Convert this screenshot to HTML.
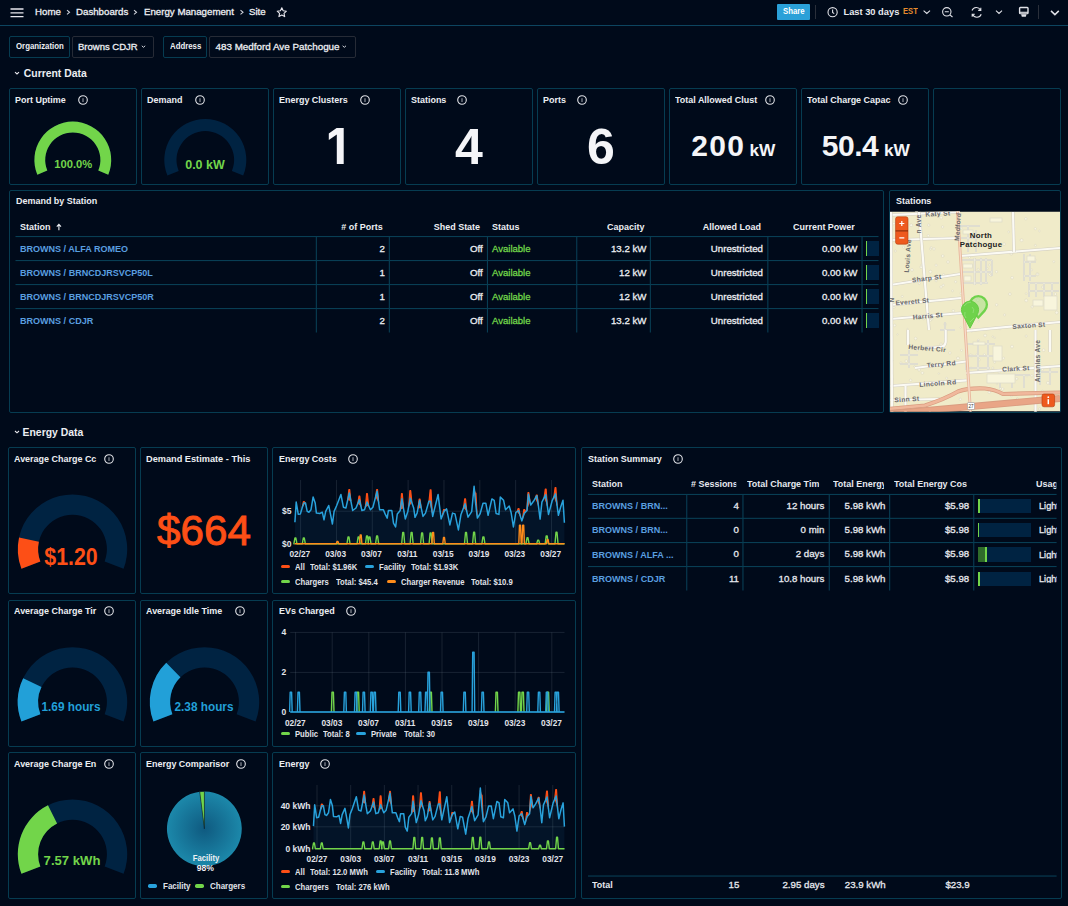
<!DOCTYPE html>
<html><head><meta charset="utf-8">
<style>
*{box-sizing:border-box;margin:0;padding:0}
html,body{width:1068px;height:906px;overflow:hidden;background:#000a1a;font-family:"Liberation Sans",sans-serif;color:#eceef2}
.a{position:absolute;line-height:1;white-space:nowrap}
.p{position:absolute;border:1px solid #063c51;border-radius:2px}
svg{position:absolute;overflow:visible}
</style></head><body>

<div class="a" style="left:0;top:25px;width:1068px;height:1px;background:#0d4560"></div>
<svg style="left:10px;top:8px" width="14" height="10" viewBox="0 0 14 10"><path d="M0.5 1H13.5M0.5 4.8H13.5M0.5 8.6H13.5" stroke="#e8e8ee" stroke-width="1.3"/></svg>
<div class="a" style="left:35.00px;top:6.94px;font-size:9.7px;font-weight:normal;color:#eceef2;-webkit-text-stroke:0.3px #eceef2;">Home</div>
<div class="a" style="left:76.00px;top:6.94px;font-size:9.7px;font-weight:normal;color:#eceef2;-webkit-text-stroke:0.3px #eceef2;">Dashboards</div>
<div class="a" style="left:144.00px;top:6.94px;font-size:9.7px;font-weight:normal;color:#eceef2;-webkit-text-stroke:0.3px #eceef2;">Energy Management</div>
<div class="a" style="left:249.00px;top:6.94px;font-size:9.7px;font-weight:normal;color:#eceef2;-webkit-text-stroke:0.3px #eceef2;">Site</div>
<svg style="left:0;top:0" width="300" height="25"><g fill="none" stroke="#cfd2da" stroke-width="1.1"><path d="M67 10.2L69.5 12.3L67 14.4M134 10.2L136.5 12.3L134 14.4M240.5 10.2L243 12.3L240.5 14.4"/></g><path d="M281.8 7.8L283.2 10.8L286.4 11.2L284 13.4L284.7 16.6L281.8 15L278.9 16.6L279.6 13.4L277.2 11.2L280.4 10.8Z" fill="none" stroke="#e8e8ee" stroke-width="1.1" stroke-linejoin="round"/></svg>
<div class="a" style="left:777px;top:4px;width:33px;height:16px;background:#2aa0d8;border-radius:1px"></div>
<div class="a" style="left:782.60px;top:8.15px;font-size:8.2px;font-weight:bold;color:#fff;transform:scaleX(0.95);transform-origin:left;">Share</div>
<div class="a" style="left:815px;top:5px;width:1px;height:14px;background:#2a2f3a"></div>
<svg style="left:0;top:0" width="1068" height="25"><g fill="none" stroke="#e0e2e8" stroke-width="1.1">
<circle cx="832.6" cy="12.2" r="4.6"/><path d="M832.6 9.5V12.4L834.2 13.6"/>
<path d="M923.6 10.6L926.8 13.4L930 10.6M996 10.6L999 13.4L1002 10.6"/>
<circle cx="946.8" cy="11.8" r="4.2"/><path d="M944.8 11.8H948.8M949.9 14.9L952.5 17"/>
<path d="M972 10.5A4.7 4.7 0 0 1 980.5 10M981.2 14.2A4.7 4.7 0 0 1 972.6 14.6M980.8 7.8V10.4H978.2M972.2 16.8V14.2H974.8"/>
</g><path fill="#e0e2e8" fill-rule="evenodd" d="M1020.4 6.7H1027.2Q1028.7 6.7 1028.7 8.2V12.7Q1028.7 14.2 1027.2 14.2H1020.4Q1018.9 14.2 1018.9 12.7V8.2Q1018.9 6.7 1020.4 6.7ZM1020.3 8.2V11.8H1027.3V8.2Z"/><path d="M1020.3 13.1H1027.3" stroke="#5a5e66" stroke-width="0.6"/><path d="M1021.1 14.2H1026.5L1025.8 16.8H1021.8Z" fill="#e0e2e8"/><g fill="none" stroke="#e0e2e8" stroke-width="1.1">
<path d="M1051 10.9L1054.9 14.6L1058.8 10.9" stroke-width="1.5"/>
</g></svg>
<div class="a" style="left:843.50px;top:7.63px;font-size:9.3px;font-weight:bold;color:#e8e9ee;">Last 30 days</div>
<div class="a" style="left:903.30px;top:8.15px;font-size:8.2px;font-weight:bold;color:#e58a2e;transform:scaleX(0.93);transform-origin:left;">EST</div>
<div class="a" style="left:1038px;top:5px;width:1px;height:14px;background:#2a2f3a"></div>
<div class="p" style="left:9px;top:36px;width:61px;height:22px;border-color:#063c51"></div>
<div class="a" style="left:15.50px;top:42.16px;font-size:8.6px;font-weight:bold;color:#eceef2;transform:scaleX(0.91);transform-origin:left;">Organization</div>
<div class="p" style="left:72px;top:36px;width:82px;height:22px;border-color:#262b36"></div>
<div class="a" style="left:78.00px;top:42.03px;font-size:9.5px;font-weight:normal;color:#eceef2;-webkit-text-stroke:0.3px #eceef2;">Browns CDJR</div>
<div class="p" style="left:163px;top:36px;width:44px;height:22px;border-color:#063c51"></div>
<div class="a" style="left:169.50px;top:42.16px;font-size:8.6px;font-weight:bold;color:#eceef2;transform:scaleX(0.91);transform-origin:left;">Address</div>
<div class="p" style="left:209px;top:36px;width:147px;height:22px;border-color:#262b36"></div>
<div class="a" style="left:215.50px;top:41.97px;font-size:9.85px;font-weight:normal;color:#eceef2;-webkit-text-stroke:0.3px #eceef2;">483 Medford Ave Patchogue</div>
<svg style="left:0;top:0" width="400" height="60"><g fill="none" stroke="#d0d3da" stroke-width="1"><path d="M141.8 45.8L143.5 47.3L145.2 45.8M342.6 45.8L344.3 47.3L346 45.8"/></g></svg>
<svg style="left:0;top:0" width="100" height="450"><g fill="none" stroke="#e8e8ee" stroke-width="1.1"><path d="M15 72.2L17 74L19 72.2M15 431L17 432.8L19 431"/></g></svg>
<div class="a" style="left:23.80px;top:69.31px;font-size:10.4px;font-weight:bold;color:#eceef2;">Current Data</div>
<div class="a" style="left:22.60px;top:428.31px;font-size:10.4px;font-weight:bold;color:#eceef2;">Energy Data</div>
<div class="p" style="left:9px;top:88px;width:128px;height:97px"></div>
<div class="p" style="left:141px;top:88px;width:128px;height:97px"></div>
<div class="p" style="left:273px;top:88px;width:128px;height:97px"></div>
<div class="p" style="left:405px;top:88px;width:128px;height:97px"></div>
<div class="p" style="left:537px;top:88px;width:128px;height:97px"></div>
<div class="p" style="left:669px;top:88px;width:128px;height:97px"></div>
<div class="p" style="left:801px;top:88px;width:128px;height:97px"></div>
<div class="p" style="left:933px;top:88px;width:128px;height:97px"></div>
<div class="a" style="left:15.00px;top:95.04px;width:66.27px;overflow:hidden;font-size:9.7px;font-weight:bold;color:#eceef2;transform:scaleX(0.925);transform-origin:left;">Port Uptime</div>
<svg style="left:78.3px;top:95.3px" width="10" height="10" viewBox="0 0 10 10"><circle cx="5" cy="5" r="4.3" fill="none" stroke="#dfe1e6" stroke-width="1.1"/><path d="M5 3.3V6.9" stroke="#9a9ea8" stroke-width="1.1"/></svg>
<div class="a" style="left:147.00px;top:95.04px;width:49.19px;overflow:hidden;font-size:9.7px;font-weight:bold;color:#eceef2;transform:scaleX(0.925);transform-origin:left;">Demand</div>
<svg style="left:194.5px;top:95.3px" width="10" height="10" viewBox="0 0 10 10"><circle cx="5" cy="5" r="4.3" fill="none" stroke="#dfe1e6" stroke-width="1.1"/><path d="M5 3.3V6.9" stroke="#9a9ea8" stroke-width="1.1"/></svg>
<div class="a" style="left:279.00px;top:95.04px;width:84.97px;overflow:hidden;font-size:9.7px;font-weight:bold;color:#eceef2;transform:scaleX(0.925);transform-origin:left;">Energy Clusters</div>
<svg style="left:359.6px;top:95.3px" width="10" height="10" viewBox="0 0 10 10"><circle cx="5" cy="5" r="4.3" fill="none" stroke="#dfe1e6" stroke-width="1.1"/><path d="M5 3.3V6.9" stroke="#9a9ea8" stroke-width="1.1"/></svg>
<div class="a" style="left:411.00px;top:95.04px;width:48.00px;overflow:hidden;font-size:9.7px;font-weight:bold;color:#eceef2;transform:scaleX(0.925);transform-origin:left;">Stations</div>
<svg style="left:457.4px;top:95.3px" width="10" height="10" viewBox="0 0 10 10"><circle cx="5" cy="5" r="4.3" fill="none" stroke="#dfe1e6" stroke-width="1.1"/><path d="M5 3.3V6.9" stroke="#9a9ea8" stroke-width="1.1"/></svg>
<div class="a" style="left:543.00px;top:95.04px;width:34.05px;overflow:hidden;font-size:9.7px;font-weight:bold;color:#eceef2;transform:scaleX(0.925);transform-origin:left;">Ports</div>
<svg style="left:576.5px;top:95.3px" width="10" height="10" viewBox="0 0 10 10"><circle cx="5" cy="5" r="4.3" fill="none" stroke="#dfe1e6" stroke-width="1.1"/><path d="M5 3.3V6.9" stroke="#9a9ea8" stroke-width="1.1"/></svg>
<div class="a" style="left:675.00px;top:95.04px;width:95.14px;overflow:hidden;font-size:9.7px;font-weight:bold;color:#eceef2;transform:scaleX(0.925);transform-origin:left;">Total Allowed Clust</div>
<svg style="left:765px;top:95.3px" width="10" height="10" viewBox="0 0 10 10"><circle cx="5" cy="5" r="4.3" fill="none" stroke="#dfe1e6" stroke-width="1.1"/><path d="M5 3.3V6.9" stroke="#9a9ea8" stroke-width="1.1"/></svg>
<div class="a" style="left:807.00px;top:95.04px;width:95.68px;overflow:hidden;font-size:9.7px;font-weight:bold;color:#eceef2;transform:scaleX(0.925);transform-origin:left;">Total Charge Capac</div>
<svg style="left:897.5px;top:95.3px" width="10" height="10" viewBox="0 0 10 10"><circle cx="5" cy="5" r="4.3" fill="none" stroke="#dfe1e6" stroke-width="1.1"/><path d="M5 3.3V6.9" stroke="#9a9ea8" stroke-width="1.1"/></svg>
<svg style="left:0;top:0" width="1068" height="906"><path d="M37.32 174.70A38.4 38.4 0 1 1 108.28 174.70L98.30 170.56A27.599999999999998 27.599999999999998 0 1 0 47.30 170.56Z" fill="#002342"/><path d="M37.32 174.70A38.4 38.4 0 1 1 108.28 174.70L98.30 170.56A27.599999999999998 27.599999999999998 0 1 0 47.30 170.56Z" fill="#72d54a"/></svg>
<div class="a" style="left:-226.70px;width:600px;text-align:center;top:159.04px;font-size:11.2px;font-weight:bold;color:#72d54a;">100.0%</div>
<svg style="left:0;top:0" width="1068" height="906"><path d="M167.42 175.59A41.0 41.0 0 1 1 243.18 175.59L231.91 170.92A28.8 28.8 0 1 0 178.69 170.92Z" fill="#002342"/></svg>
<div class="a" style="left:-95.00px;width:600px;text-align:center;top:159.32px;font-size:12.5px;font-weight:bold;color:#72d54a;">0.0 kW</div>
<svg style="left:0;top:0" width="400" height="200"><path d="M328.8 133.5L336.6 128H343.7V163.9H336.8V134.6L328.8 139.9Z" fill="#f4f5f8"/></svg>
<div class="a" style="left:369px;width:200px;text-align:center;top:122.4px;font-size:50px;font-weight:bold;color:#f4f5f8">4</div>
<div class="a" style="left:501px;width:200px;text-align:center;top:122.4px;font-size:50px;font-weight:bold;color:#f4f5f8">6</div>
<div class="a" style="left:691.2px;top:131.2px;font-size:30px;font-weight:bold;color:#f4f5f8;letter-spacing:1.4px">200</div>
<div class="a" style="left:749.5px;top:142.3px;font-size:17.3px;font-weight:bold;color:#f4f5f8">kW</div>
<div class="a" style="left:821.8px;top:131.2px;font-size:30px;font-weight:bold;color:#f4f5f8;letter-spacing:-0.5px">50.4</div>
<div class="a" style="left:884px;top:142.3px;font-size:17.3px;font-weight:bold;color:#f4f5f8">kW</div>
<div class="p" style="left:9px;top:190px;width:875px;height:223px"></div>
<div class="a" style="left:15.70px;top:196.34px;font-size:9.7px;font-weight:bold;color:#eceef2;transform:scaleX(0.925);transform-origin:left;">Demand by Station</div>
<div class="a" style="left:19.70px;top:221.94px;font-size:9.7px;font-weight:bold;color:#eceef2;transform:scaleX(0.925);transform-origin:left;">Station</div>
<svg style="left:0;top:0" width="100" height="240"><path d="M58.9 230.2V224.6M56.8 226.6L58.9 224.4L61 226.6" fill="none" stroke="#eceef2" stroke-width="1.1"/></svg>
<div class="a" style="right:685.00px;top:221.94px;font-size:9.7px;font-weight:bold;color:#eceef2;transform:scaleX(0.925);transform-origin:right;"># of Ports</div>
<div class="a" style="right:587.50px;top:221.94px;font-size:9.7px;font-weight:bold;color:#eceef2;transform:scaleX(0.925);transform-origin:right;">Shed State</div>
<div class="a" style="left:491.60px;top:221.94px;font-size:9.7px;font-weight:bold;color:#eceef2;transform:scaleX(0.925);transform-origin:left;">Status</div>
<div class="a" style="right:423.70px;top:221.94px;font-size:9.7px;font-weight:bold;color:#eceef2;transform:scaleX(0.925);transform-origin:right;">Capacity</div>
<div class="a" style="right:307.00px;top:221.94px;font-size:9.7px;font-weight:bold;color:#eceef2;transform:scaleX(0.925);transform-origin:right;">Allowed Load</div>
<div class="a" style="right:213.00px;top:221.94px;font-size:9.7px;font-weight:bold;color:#eceef2;transform:scaleX(0.925);transform-origin:right;">Current Power</div>
<svg style="left:0;top:0" width="1068" height="906"><rect x="15.5" y="236.0" width="863" height="1.1" fill="#083e54"/><rect x="15.5" y="260.0" width="863" height="1.1" fill="#083e54"/><rect x="15.5" y="284.0" width="863" height="1.1" fill="#083e54"/><rect x="15.5" y="308.0" width="863" height="1.1" fill="#083e54"/><rect x="315.8" y="237" width="1.1" height="95.5" fill="#083e54"/><rect x="388.8" y="237" width="1.1" height="95.5" fill="#083e54"/><rect x="486.9" y="237" width="1.1" height="95.5" fill="#083e54"/><rect x="576.2" y="237" width="1.1" height="95.5" fill="#083e54"/><rect x="649.8" y="237" width="1.1" height="95.5" fill="#083e54"/><rect x="767.3" y="237" width="1.1" height="95.5" fill="#083e54"/><rect x="861.5" y="237" width="1.1" height="95.5" fill="#083e54"/></svg>
<div class="a" style="left:19.70px;top:243.74px;font-size:9.5px;font-weight:bold;color:#5a9fe0;transform:scaleX(0.95);transform-origin:left;">BROWNS / ALFA ROMEO</div>
<div class="a" style="right:683.00px;top:243.64px;font-size:9.7px;font-weight:normal;color:#eceef2;-webkit-text-stroke:0.3px #eceef2;">2</div>
<div class="a" style="right:585.30px;top:243.64px;font-size:9.7px;font-weight:normal;color:#eceef2;-webkit-text-stroke:0.3px #eceef2;">Off</div>
<div class="a" style="left:491.60px;top:243.64px;font-size:9.7px;font-weight:normal;color:#72d54a;-webkit-text-stroke:0.3px #72d54a;transform:scaleX(0.985);transform-origin:left;">Available</div>
<div class="a" style="right:421.50px;top:243.64px;font-size:9.7px;font-weight:normal;color:#eceef2;-webkit-text-stroke:0.3px #eceef2;">13.2 kW</div>
<div class="a" style="right:305.00px;top:243.64px;font-size:9.7px;font-weight:normal;color:#eceef2;-webkit-text-stroke:0.3px #eceef2;transform:scaleX(1.0);transform-origin:right;">Unrestricted</div>
<div class="a" style="right:210.50px;top:243.64px;font-size:9.7px;font-weight:normal;color:#eceef2;-webkit-text-stroke:0.3px #eceef2;">0.00 kW</div>
<div class="a" style="left:866px;top:240.8px;width:12.5px;height:15.5px;background:#002342"></div>
<div class="a" style="left:866px;top:240.8px;width:1px;height:15.5px;background:#72d54a"></div>
<div class="a" style="left:19.70px;top:267.74px;font-size:9.5px;font-weight:bold;color:#5a9fe0;transform:scaleX(0.95);transform-origin:left;">BROWNS / BRNCDJRSVCP50L</div>
<div class="a" style="right:683.00px;top:267.64px;font-size:9.7px;font-weight:normal;color:#eceef2;-webkit-text-stroke:0.3px #eceef2;">1</div>
<div class="a" style="right:585.30px;top:267.64px;font-size:9.7px;font-weight:normal;color:#eceef2;-webkit-text-stroke:0.3px #eceef2;">Off</div>
<div class="a" style="left:491.60px;top:267.64px;font-size:9.7px;font-weight:normal;color:#72d54a;-webkit-text-stroke:0.3px #72d54a;transform:scaleX(0.985);transform-origin:left;">Available</div>
<div class="a" style="right:421.50px;top:267.64px;font-size:9.7px;font-weight:normal;color:#eceef2;-webkit-text-stroke:0.3px #eceef2;">12 kW</div>
<div class="a" style="right:305.00px;top:267.64px;font-size:9.7px;font-weight:normal;color:#eceef2;-webkit-text-stroke:0.3px #eceef2;transform:scaleX(1.0);transform-origin:right;">Unrestricted</div>
<div class="a" style="right:210.50px;top:267.64px;font-size:9.7px;font-weight:normal;color:#eceef2;-webkit-text-stroke:0.3px #eceef2;">0.00 kW</div>
<div class="a" style="left:866px;top:264.8px;width:12.5px;height:15.5px;background:#002342"></div>
<div class="a" style="left:866px;top:264.8px;width:1px;height:15.5px;background:#72d54a"></div>
<div class="a" style="left:19.70px;top:291.74px;font-size:9.5px;font-weight:bold;color:#5a9fe0;transform:scaleX(0.95);transform-origin:left;">BROWNS / BRNCDJRSVCP50R</div>
<div class="a" style="right:683.00px;top:291.64px;font-size:9.7px;font-weight:normal;color:#eceef2;-webkit-text-stroke:0.3px #eceef2;">1</div>
<div class="a" style="right:585.30px;top:291.64px;font-size:9.7px;font-weight:normal;color:#eceef2;-webkit-text-stroke:0.3px #eceef2;">Off</div>
<div class="a" style="left:491.60px;top:291.64px;font-size:9.7px;font-weight:normal;color:#72d54a;-webkit-text-stroke:0.3px #72d54a;transform:scaleX(0.985);transform-origin:left;">Available</div>
<div class="a" style="right:421.50px;top:291.64px;font-size:9.7px;font-weight:normal;color:#eceef2;-webkit-text-stroke:0.3px #eceef2;">12 kW</div>
<div class="a" style="right:305.00px;top:291.64px;font-size:9.7px;font-weight:normal;color:#eceef2;-webkit-text-stroke:0.3px #eceef2;transform:scaleX(1.0);transform-origin:right;">Unrestricted</div>
<div class="a" style="right:210.50px;top:291.64px;font-size:9.7px;font-weight:normal;color:#eceef2;-webkit-text-stroke:0.3px #eceef2;">0.00 kW</div>
<div class="a" style="left:866px;top:288.8px;width:12.5px;height:15.5px;background:#002342"></div>
<div class="a" style="left:866px;top:288.8px;width:1px;height:15.5px;background:#72d54a"></div>
<div class="a" style="left:19.70px;top:315.74px;font-size:9.5px;font-weight:bold;color:#5a9fe0;transform:scaleX(0.95);transform-origin:left;">BROWNS / CDJR</div>
<div class="a" style="right:683.00px;top:315.64px;font-size:9.7px;font-weight:normal;color:#eceef2;-webkit-text-stroke:0.3px #eceef2;">2</div>
<div class="a" style="right:585.30px;top:315.64px;font-size:9.7px;font-weight:normal;color:#eceef2;-webkit-text-stroke:0.3px #eceef2;">Off</div>
<div class="a" style="left:491.60px;top:315.64px;font-size:9.7px;font-weight:normal;color:#72d54a;-webkit-text-stroke:0.3px #72d54a;transform:scaleX(0.985);transform-origin:left;">Available</div>
<div class="a" style="right:421.50px;top:315.64px;font-size:9.7px;font-weight:normal;color:#eceef2;-webkit-text-stroke:0.3px #eceef2;">13.2 kW</div>
<div class="a" style="right:305.00px;top:315.64px;font-size:9.7px;font-weight:normal;color:#eceef2;-webkit-text-stroke:0.3px #eceef2;transform:scaleX(1.0);transform-origin:right;">Unrestricted</div>
<div class="a" style="right:210.50px;top:315.64px;font-size:9.7px;font-weight:normal;color:#eceef2;-webkit-text-stroke:0.3px #eceef2;">0.00 kW</div>
<div class="a" style="left:866px;top:312.8px;width:12.5px;height:15.5px;background:#002342"></div>
<div class="a" style="left:866px;top:312.8px;width:1px;height:15.5px;background:#72d54a"></div>
<div class="p" style="left:889px;top:190px;width:172px;height:223px"></div>
<div class="a" style="left:895.60px;top:196.34px;font-size:9.7px;font-weight:bold;color:#eceef2;transform:scaleX(0.925);transform-origin:left;">Stations</div>
<svg style="left:0;top:0" width="1068" height="906"><defs><clipPath id="mc"><rect x="890" y="211.5" width="170" height="200.0"/></clipPath></defs><g clip-path="url(#mc)"><rect x="890" y="211.5" width="170" height="200.0" fill="#f0ebc9"/><circle cx="930.5" cy="320.3" r="1.1" fill="#f8f5e2" stroke="#d9d5bf" stroke-width="0.5"/><circle cx="992.7" cy="336.6" r="0.8" fill="#f8f5e2" stroke="#d9d5bf" stroke-width="0.5"/><circle cx="892.2" cy="379.0" r="1.0" fill="#f8f5e2" stroke="#d9d5bf" stroke-width="0.5"/><circle cx="929.8" cy="410.6" r="1.1" fill="#f8f5e2" stroke="#d9d5bf" stroke-width="0.5"/><circle cx="1032.2" cy="306.8" r="1.2" fill="#f8f5e2" stroke="#d9d5bf" stroke-width="0.5"/><circle cx="915.6" cy="338.5" r="1.4" fill="#f8f5e2" stroke="#d9d5bf" stroke-width="0.5"/><circle cx="978.9" cy="359.8" r="1.3" fill="#f8f5e2" stroke="#d9d5bf" stroke-width="0.5"/><circle cx="900.9" cy="363.1" r="1.2" fill="#f8f5e2" stroke="#d9d5bf" stroke-width="0.5"/><circle cx="941.2" cy="217.7" r="1.4" fill="#f8f5e2" stroke="#d9d5bf" stroke-width="0.5"/><circle cx="970.4" cy="355.3" r="1.4" fill="#f8f5e2" stroke="#d9d5bf" stroke-width="0.5"/><circle cx="1011.4" cy="395.7" r="1.1" fill="#f8f5e2" stroke="#d9d5bf" stroke-width="0.5"/><circle cx="1026.2" cy="300.4" r="1.5" fill="#f8f5e2" stroke="#d9d5bf" stroke-width="0.5"/><circle cx="1039.4" cy="231.0" r="0.9" fill="#f8f5e2" stroke="#d9d5bf" stroke-width="0.5"/><circle cx="926.9" cy="404.6" r="1.1" fill="#f8f5e2" stroke="#d9d5bf" stroke-width="0.5"/><circle cx="996.5" cy="271.7" r="1.2" fill="#f8f5e2" stroke="#d9d5bf" stroke-width="0.5"/><circle cx="955.6" cy="281.7" r="1.2" fill="#f8f5e2" stroke="#d9d5bf" stroke-width="0.5"/><circle cx="989.3" cy="392.3" r="1.3" fill="#f8f5e2" stroke="#d9d5bf" stroke-width="0.5"/><circle cx="1047.9" cy="382.8" r="1.5" fill="#f8f5e2" stroke="#d9d5bf" stroke-width="0.5"/><circle cx="1004.1" cy="244.1" r="1.4" fill="#f8f5e2" stroke="#d9d5bf" stroke-width="0.5"/><circle cx="1054.0" cy="392.4" r="1.2" fill="#f8f5e2" stroke="#d9d5bf" stroke-width="0.5"/><circle cx="1011.3" cy="253.7" r="1.4" fill="#f8f5e2" stroke="#d9d5bf" stroke-width="0.5"/><circle cx="987.5" cy="268.5" r="0.8" fill="#f8f5e2" stroke="#d9d5bf" stroke-width="0.5"/><circle cx="1035.2" cy="409.5" r="0.9" fill="#f8f5e2" stroke="#d9d5bf" stroke-width="0.5"/><circle cx="1026.1" cy="293.6" r="0.9" fill="#f8f5e2" stroke="#d9d5bf" stroke-width="0.5"/><circle cx="940.0" cy="365.3" r="1.4" fill="#f8f5e2" stroke="#d9d5bf" stroke-width="0.5"/><circle cx="897.5" cy="334.4" r="0.8" fill="#f8f5e2" stroke="#d9d5bf" stroke-width="0.5"/><circle cx="1012.1" cy="277.7" r="1.4" fill="#f8f5e2" stroke="#d9d5bf" stroke-width="0.5"/><circle cx="1056.7" cy="312.6" r="1.5" fill="#f8f5e2" stroke="#d9d5bf" stroke-width="0.5"/><circle cx="942.6" cy="226.9" r="1.2" fill="#f8f5e2" stroke="#d9d5bf" stroke-width="0.5"/><circle cx="895.3" cy="251.0" r="1.1" fill="#f8f5e2" stroke="#d9d5bf" stroke-width="0.5"/><circle cx="993.8" cy="242.7" r="0.8" fill="#f8f5e2" stroke="#d9d5bf" stroke-width="0.5"/><circle cx="1037.5" cy="274.3" r="1.5" fill="#f8f5e2" stroke="#d9d5bf" stroke-width="0.5"/><circle cx="1042.4" cy="287.1" r="1.1" fill="#f8f5e2" stroke="#d9d5bf" stroke-width="0.5"/><circle cx="978.4" cy="340.3" r="1.2" fill="#f8f5e2" stroke="#d9d5bf" stroke-width="0.5"/><circle cx="985.1" cy="335.5" r="1.5" fill="#f8f5e2" stroke="#d9d5bf" stroke-width="0.5"/><circle cx="976.2" cy="297.7" r="1.3" fill="#f8f5e2" stroke="#d9d5bf" stroke-width="0.5"/><circle cx="930.4" cy="271.7" r="1.5" fill="#f8f5e2" stroke="#d9d5bf" stroke-width="0.5"/><circle cx="978.6" cy="321.2" r="0.8" fill="#f8f5e2" stroke="#d9d5bf" stroke-width="0.5"/><circle cx="960.6" cy="327.5" r="0.8" fill="#f8f5e2" stroke="#d9d5bf" stroke-width="0.5"/><circle cx="994.7" cy="337.9" r="0.8" fill="#f8f5e2" stroke="#d9d5bf" stroke-width="0.5"/><circle cx="996.6" cy="304.8" r="1.3" fill="#f8f5e2" stroke="#d9d5bf" stroke-width="0.5"/><circle cx="949.9" cy="352.9" r="1.3" fill="#f8f5e2" stroke="#d9d5bf" stroke-width="0.5"/><circle cx="893.8" cy="223.6" r="1.3" fill="#f8f5e2" stroke="#d9d5bf" stroke-width="0.5"/><circle cx="1053.8" cy="261.7" r="1.1" fill="#f8f5e2" stroke="#d9d5bf" stroke-width="0.5"/><circle cx="990.8" cy="275.5" r="1.1" fill="#f8f5e2" stroke="#d9d5bf" stroke-width="0.5"/><circle cx="943.2" cy="285.3" r="1.2" fill="#f8f5e2" stroke="#d9d5bf" stroke-width="0.5"/><circle cx="941.1" cy="286.9" r="1.3" fill="#f8f5e2" stroke="#d9d5bf" stroke-width="0.5"/><circle cx="894.6" cy="325.4" r="1.3" fill="#f8f5e2" stroke="#d9d5bf" stroke-width="0.5"/><circle cx="942.7" cy="256.0" r="1.4" fill="#f8f5e2" stroke="#d9d5bf" stroke-width="0.5"/><circle cx="930.6" cy="249.0" r="1.1" fill="#f8f5e2" stroke="#d9d5bf" stroke-width="0.5"/><circle cx="1008.7" cy="231.9" r="1.0" fill="#f8f5e2" stroke="#d9d5bf" stroke-width="0.5"/><circle cx="946.7" cy="378.2" r="1.1" fill="#f8f5e2" stroke="#d9d5bf" stroke-width="0.5"/><circle cx="1035.4" cy="245.4" r="1.0" fill="#f8f5e2" stroke="#d9d5bf" stroke-width="0.5"/><circle cx="1000.5" cy="388.5" r="1.1" fill="#f8f5e2" stroke="#d9d5bf" stroke-width="0.5"/><circle cx="928.3" cy="235.7" r="1.2" fill="#f8f5e2" stroke="#d9d5bf" stroke-width="0.5"/><circle cx="922.4" cy="372.9" r="1.4" fill="#f8f5e2" stroke="#d9d5bf" stroke-width="0.5"/><circle cx="921.2" cy="267.2" r="1.4" fill="#f8f5e2" stroke="#d9d5bf" stroke-width="0.5"/><circle cx="999.1" cy="372.8" r="1.0" fill="#f8f5e2" stroke="#d9d5bf" stroke-width="0.5"/><circle cx="912.0" cy="269.9" r="1.4" fill="#f8f5e2" stroke="#d9d5bf" stroke-width="0.5"/><circle cx="936.1" cy="280.8" r="1.1" fill="#f8f5e2" stroke="#d9d5bf" stroke-width="0.5"/><circle cx="961.4" cy="293.4" r="1.4" fill="#f8f5e2" stroke="#d9d5bf" stroke-width="0.5"/><circle cx="916.5" cy="212.4" r="1.5" fill="#f8f5e2" stroke="#d9d5bf" stroke-width="0.5"/><circle cx="1039.6" cy="408.9" r="1.1" fill="#f8f5e2" stroke="#d9d5bf" stroke-width="0.5"/><circle cx="1051.5" cy="397.0" r="1.0" fill="#f8f5e2" stroke="#d9d5bf" stroke-width="0.5"/><circle cx="1016.7" cy="378.8" r="1.3" fill="#f8f5e2" stroke="#d9d5bf" stroke-width="0.5"/><circle cx="978.2" cy="269.3" r="1.0" fill="#f8f5e2" stroke="#d9d5bf" stroke-width="0.5"/><circle cx="928.7" cy="225.1" r="1.2" fill="#f8f5e2" stroke="#d9d5bf" stroke-width="0.5"/><circle cx="938.8" cy="373.5" r="0.8" fill="#f8f5e2" stroke="#d9d5bf" stroke-width="0.5"/><circle cx="1043.6" cy="350.2" r="1.4" fill="#f8f5e2" stroke="#d9d5bf" stroke-width="0.5"/><circle cx="1042.4" cy="391.4" r="1.2" fill="#f8f5e2" stroke="#d9d5bf" stroke-width="0.5"/><circle cx="892.2" cy="360.6" r="0.9" fill="#f8f5e2" stroke="#d9d5bf" stroke-width="0.5"/><circle cx="941.0" cy="344.1" r="1.2" fill="#f8f5e2" stroke="#d9d5bf" stroke-width="0.5"/><circle cx="960.3" cy="399.3" r="1.2" fill="#f8f5e2" stroke="#d9d5bf" stroke-width="0.5"/><circle cx="948.0" cy="262.0" r="1.4" fill="#f8f5e2" stroke="#d9d5bf" stroke-width="0.5"/><circle cx="971.1" cy="368.0" r="1.0" fill="#f8f5e2" stroke="#d9d5bf" stroke-width="0.5"/><circle cx="923.5" cy="318.4" r="1.4" fill="#f8f5e2" stroke="#d9d5bf" stroke-width="0.5"/><circle cx="919.1" cy="369.8" r="1.4" fill="#f8f5e2" stroke="#d9d5bf" stroke-width="0.5"/><circle cx="1027.0" cy="376.2" r="0.8" fill="#f8f5e2" stroke="#d9d5bf" stroke-width="0.5"/><circle cx="996.9" cy="384.0" r="0.8" fill="#f8f5e2" stroke="#d9d5bf" stroke-width="0.5"/><circle cx="936.1" cy="265.2" r="1.2" fill="#f8f5e2" stroke="#d9d5bf" stroke-width="0.5"/><circle cx="961.9" cy="306.1" r="1.3" fill="#f8f5e2" stroke="#d9d5bf" stroke-width="0.5"/><circle cx="890.3" cy="222.5" r="0.9" fill="#f8f5e2" stroke="#d9d5bf" stroke-width="0.5"/><circle cx="911.2" cy="225.2" r="1.5" fill="#f8f5e2" stroke="#d9d5bf" stroke-width="0.5"/><circle cx="1035.3" cy="228.7" r="1.2" fill="#f8f5e2" stroke="#d9d5bf" stroke-width="0.5"/><circle cx="943.7" cy="274.4" r="1.0" fill="#f8f5e2" stroke="#d9d5bf" stroke-width="0.5"/><circle cx="1000.0" cy="328.8" r="1.1" fill="#f8f5e2" stroke="#d9d5bf" stroke-width="0.5"/><circle cx="922.5" cy="277.3" r="0.9" fill="#f8f5e2" stroke="#d9d5bf" stroke-width="0.5"/><circle cx="984.4" cy="354.7" r="1.1" fill="#f8f5e2" stroke="#d9d5bf" stroke-width="0.5"/><circle cx="903.6" cy="247.2" r="1.1" fill="#f8f5e2" stroke="#d9d5bf" stroke-width="0.5"/><circle cx="992.8" cy="368.0" r="1.1" fill="#f8f5e2" stroke="#d9d5bf" stroke-width="0.5"/><circle cx="1026.2" cy="336.1" r="1.1" fill="#f8f5e2" stroke="#d9d5bf" stroke-width="0.5"/><circle cx="953.3" cy="310.7" r="1.3" fill="#f8f5e2" stroke="#d9d5bf" stroke-width="0.5"/><circle cx="961.5" cy="350.3" r="1.1" fill="#f8f5e2" stroke="#d9d5bf" stroke-width="0.5"/><circle cx="931.7" cy="318.7" r="1.3" fill="#f8f5e2" stroke="#d9d5bf" stroke-width="0.5"/><circle cx="902.2" cy="296.5" r="1.1" fill="#f8f5e2" stroke="#d9d5bf" stroke-width="0.5"/><circle cx="1039.5" cy="398.8" r="1.1" fill="#f8f5e2" stroke="#d9d5bf" stroke-width="0.5"/><circle cx="1042.6" cy="369.7" r="1.0" fill="#f8f5e2" stroke="#d9d5bf" stroke-width="0.5"/><circle cx="968.9" cy="236.1" r="1.4" fill="#f8f5e2" stroke="#d9d5bf" stroke-width="0.5"/><circle cx="1002.6" cy="389.0" r="1.4" fill="#f8f5e2" stroke="#d9d5bf" stroke-width="0.5"/><circle cx="1003.5" cy="358.2" r="1.2" fill="#f8f5e2" stroke="#d9d5bf" stroke-width="0.5"/><circle cx="907.5" cy="329.1" r="0.8" fill="#f8f5e2" stroke="#d9d5bf" stroke-width="0.5"/><circle cx="914.4" cy="366.4" r="0.8" fill="#f8f5e2" stroke="#d9d5bf" stroke-width="0.5"/><circle cx="905.6" cy="231.4" r="1.4" fill="#f8f5e2" stroke="#d9d5bf" stroke-width="0.5"/><circle cx="920.5" cy="216.2" r="1.4" fill="#f8f5e2" stroke="#d9d5bf" stroke-width="0.5"/><circle cx="910.6" cy="380.3" r="1.3" fill="#f8f5e2" stroke="#d9d5bf" stroke-width="0.5"/><circle cx="1032.2" cy="402.0" r="1.2" fill="#f8f5e2" stroke="#d9d5bf" stroke-width="0.5"/><circle cx="1025.8" cy="218.8" r="1.3" fill="#f8f5e2" stroke="#d9d5bf" stroke-width="0.5"/><circle cx="976.9" cy="354.5" r="0.9" fill="#f8f5e2" stroke="#d9d5bf" stroke-width="0.5"/><circle cx="1017.3" cy="398.4" r="0.8" fill="#f8f5e2" stroke="#d9d5bf" stroke-width="0.5"/><circle cx="945.1" cy="324.3" r="1.4" fill="#f8f5e2" stroke="#d9d5bf" stroke-width="0.5"/><circle cx="931.2" cy="247.5" r="1.0" fill="#f8f5e2" stroke="#d9d5bf" stroke-width="0.5"/><circle cx="994.7" cy="362.2" r="1.1" fill="#f8f5e2" stroke="#d9d5bf" stroke-width="0.5"/><circle cx="952.5" cy="290.8" r="1.0" fill="#f8f5e2" stroke="#d9d5bf" stroke-width="0.5"/><circle cx="961.1" cy="228.2" r="1.2" fill="#f8f5e2" stroke="#d9d5bf" stroke-width="0.5"/><circle cx="1055.4" cy="294.1" r="1.3" fill="#f8f5e2" stroke="#d9d5bf" stroke-width="0.5"/><circle cx="917.3" cy="349.7" r="1.3" fill="#f8f5e2" stroke="#d9d5bf" stroke-width="0.5"/><circle cx="1004.6" cy="314.9" r="1.1" fill="#f8f5e2" stroke="#d9d5bf" stroke-width="0.5"/><circle cx="999.3" cy="391.0" r="0.9" fill="#f8f5e2" stroke="#d9d5bf" stroke-width="0.5"/><circle cx="906.3" cy="361.1" r="1.4" fill="#f8f5e2" stroke="#d9d5bf" stroke-width="0.5"/><circle cx="977.9" cy="300.1" r="1.3" fill="#f8f5e2" stroke="#d9d5bf" stroke-width="0.5"/><circle cx="921.6" cy="265.0" r="0.9" fill="#f8f5e2" stroke="#d9d5bf" stroke-width="0.5"/><circle cx="989.6" cy="274.5" r="1.0" fill="#f8f5e2" stroke="#d9d5bf" stroke-width="0.5"/><circle cx="1007.5" cy="402.2" r="1.0" fill="#f8f5e2" stroke="#d9d5bf" stroke-width="0.5"/><circle cx="1009.9" cy="294.1" r="1.4" fill="#f8f5e2" stroke="#d9d5bf" stroke-width="0.5"/><circle cx="989.4" cy="264.9" r="1.0" fill="#f8f5e2" stroke="#d9d5bf" stroke-width="0.5"/><circle cx="893.9" cy="307.4" r="1.1" fill="#f8f5e2" stroke="#d9d5bf" stroke-width="0.5"/><circle cx="919.3" cy="283.6" r="1.0" fill="#f8f5e2" stroke="#d9d5bf" stroke-width="0.5"/><circle cx="1021.6" cy="240.2" r="1.5" fill="#f8f5e2" stroke="#d9d5bf" stroke-width="0.5"/><circle cx="971.5" cy="331.3" r="1.1" fill="#f8f5e2" stroke="#d9d5bf" stroke-width="0.5"/><circle cx="1031.9" cy="375.8" r="1.2" fill="#f8f5e2" stroke="#d9d5bf" stroke-width="0.5"/><circle cx="971.8" cy="355.6" r="1.4" fill="#f8f5e2" stroke="#d9d5bf" stroke-width="0.5"/><circle cx="958.0" cy="358.2" r="1.5" fill="#f8f5e2" stroke="#d9d5bf" stroke-width="0.5"/><circle cx="969.5" cy="257.4" r="1.0" fill="#f8f5e2" stroke="#d9d5bf" stroke-width="0.5"/><circle cx="1012.0" cy="346.6" r="1.5" fill="#f8f5e2" stroke="#d9d5bf" stroke-width="0.5"/><circle cx="1035.2" cy="259.9" r="0.9" fill="#f8f5e2" stroke="#d9d5bf" stroke-width="0.5"/><circle cx="934.0" cy="248.9" r="1.3" fill="#f8f5e2" stroke="#d9d5bf" stroke-width="0.5"/><circle cx="1036.0" cy="391.5" r="1.0" fill="#f8f5e2" stroke="#d9d5bf" stroke-width="0.5"/><circle cx="1037.1" cy="274.2" r="1.1" fill="#f8f5e2" stroke="#d9d5bf" stroke-width="0.5"/><circle cx="1013.9" cy="228.7" r="0.9" fill="#f8f5e2" stroke="#d9d5bf" stroke-width="0.5"/><circle cx="1031.8" cy="269.9" r="1.0" fill="#f8f5e2" stroke="#d9d5bf" stroke-width="0.5"/><path d="M962 260H992M962 272H992M962 283H988M974.7 258V285M981 258V285M986 258V283M992 260V276" fill="none" stroke="#d3d0c3" stroke-width="2.0"/><path d="M962 260H992M962 272H992M962 283H988M974.7 258V285M981 258V285M986 258V283M992 260V276" fill="none" stroke="#f4f2e4" stroke-width="0.8"/><path d="M960 226H980M961 238H978M968 226V252M976 230V252" fill="none" stroke="#d3d0c3" stroke-width="2.0"/><path d="M960 226H980M961 238H978M968 226V252M976 230V252" fill="none" stroke="#f4f2e4" stroke-width="0.8"/><path d="M1024 254V281M1024 262H1036M1030 254V281M1024 276H1036" fill="none" stroke="#d3d0c3" stroke-width="2.0"/><path d="M1024 254V281M1024 262H1036M1030 254V281M1024 276H1036" fill="none" stroke="#f4f2e4" stroke-width="0.8"/><path d="M1029 297V283H1059M1036 283V297M1044 283V297M1052 283V297M1029 291H1059" fill="none" stroke="#d3d0c3" stroke-width="2.0"/><path d="M1029 297V283H1059M1036 283V297M1044 283V297M1052 283V297M1029 291H1059" fill="none" stroke="#f4f2e4" stroke-width="0.8"/><path d="M966 340V370M966 344H995M966 356H995M966 368H990M978 340V372M988 340V372" fill="none" stroke="#d3d0c3" stroke-width="2.0"/><path d="M966 340V370M966 344H995M966 356H995M966 368H990M978 340V372M988 340V372" fill="none" stroke="#f4f2e4" stroke-width="0.8"/><path d="M990 375H1030M1000 375V388M1012 375V388M1024 375V388" fill="none" stroke="#d3d0c3" stroke-width="2.0"/><path d="M990 375H1030M1000 375V388M1012 375V388M1024 375V388" fill="none" stroke="#f4f2e4" stroke-width="0.8"/><path d="M1040 365V385M1040 372H1058M1050 365V385" fill="none" stroke="#d3d0c3" stroke-width="2.0"/><path d="M1040 365V385M1040 372H1058M1050 365V385" fill="none" stroke="#f4f2e4" stroke-width="0.8"/><path d="M900 355H918M900 364H918M909 350V368" fill="none" stroke="#d3d0c3" stroke-width="2.0"/><path d="M900 355H918M900 364H918M909 350V368" fill="none" stroke="#f4f2e4" stroke-width="0.8"/><path d="M940 330H955M945 322V338" fill="none" stroke="#d3d0c3" stroke-width="2.0"/><path d="M940 330H955M945 322V338" fill="none" stroke="#f4f2e4" stroke-width="0.8"/><rect x="963" y="264" width="9.5" height="4" fill="#f8f5dc" stroke="#dcd9c8" stroke-width="0.7"/><rect x="964" y="276" width="7" height="5" fill="#f8f5dc" stroke="#dcd9c8" stroke-width="0.7"/><rect x="1027" y="256" width="8" height="5" fill="#f8f5dc" stroke="#dcd9c8" stroke-width="0.7"/><rect x="1044" y="296" width="13" height="14" fill="#f8f5dc" stroke="#dcd9c8" stroke-width="0.7"/><rect x="1033" y="300" width="10" height="6" fill="#f8f5dc" stroke="#dcd9c8" stroke-width="0.7"/><rect x="993" y="346" width="9" height="15" fill="#f8f5dc" stroke="#dcd9c8" stroke-width="0.7"/><rect x="987" y="374" width="28" height="9" fill="#f8f5dc" stroke="#dcd9c8" stroke-width="0.7"/><rect x="973" y="342" width="12" height="3" fill="#f8f5dc" stroke="#dcd9c8" stroke-width="0.7"/><rect x="1042" y="393" width="4" height="4" fill="#f8f5dc" stroke="#dcd9c8" stroke-width="0.7"/><rect x="990" y="218" width="12" height="4" fill="#f8f5dc" stroke="#dcd9c8" stroke-width="0.7"/><rect x="963" y="230" width="10" height="4" fill="#f8f5dc" stroke="#dcd9c8" stroke-width="0.7"/><path d="M890 215L960 212" fill="none" stroke="#d2cec0" stroke-width="3.2" stroke-linecap="butt"/><path d="M890 215L960 212" fill="none" stroke="#fbfaf4" stroke-width="2.2"/><path d="M890 240L960 238" fill="none" stroke="#d2cec0" stroke-width="3.2" stroke-linecap="butt"/><path d="M890 240L960 238" fill="none" stroke="#fbfaf4" stroke-width="2.2"/><path d="M960 256L1060 248" fill="none" stroke="#d2cec0" stroke-width="3.2" stroke-linecap="butt"/><path d="M960 256L1060 248" fill="none" stroke="#fbfaf4" stroke-width="2.2"/><path d="M890 285L960 274" fill="none" stroke="#d2cec0" stroke-width="3.2" stroke-linecap="butt"/><path d="M890 285L960 274" fill="none" stroke="#fbfaf4" stroke-width="2.2"/><path d="M890 305L961 298" fill="none" stroke="#d2cec0" stroke-width="3.2" stroke-linecap="butt"/><path d="M890 305L961 298" fill="none" stroke="#fbfaf4" stroke-width="2.2"/><path d="M890 319L962 313" fill="none" stroke="#d2cec0" stroke-width="3.2" stroke-linecap="butt"/><path d="M890 319L962 313" fill="none" stroke="#fbfaf4" stroke-width="2.2"/><path d="M965 331L1060 322" fill="none" stroke="#d2cec0" stroke-width="3.2" stroke-linecap="butt"/><path d="M965 331L1060 322" fill="none" stroke="#fbfaf4" stroke-width="2.2"/><path d="M908 330V345" fill="none" stroke="#d2cec0" stroke-width="3.2" stroke-linecap="butt"/><path d="M908 330V345" fill="none" stroke="#fbfaf4" stroke-width="2.2"/><path d="M945.7 330V342Q945 347 940 347L925 348" fill="none" stroke="#d2cec0" stroke-width="3.2" stroke-linecap="butt"/><path d="M945.7 330V342Q945 347 940 347L925 348" fill="none" stroke="#fbfaf4" stroke-width="2.2"/><path d="M915 368L966 361.5" fill="none" stroke="#d2cec0" stroke-width="3.2" stroke-linecap="butt"/><path d="M915 368L966 361.5" fill="none" stroke="#fbfaf4" stroke-width="2.2"/><path d="M966 373L1060 366" fill="none" stroke="#d2cec0" stroke-width="3.2" stroke-linecap="butt"/><path d="M966 373L1060 366" fill="none" stroke="#fbfaf4" stroke-width="2.2"/><path d="M890 386L966.6 380.4" fill="none" stroke="#d2cec0" stroke-width="3.2" stroke-linecap="butt"/><path d="M890 386L966.6 380.4" fill="none" stroke="#fbfaf4" stroke-width="2.2"/><path d="M890 400L940 399" fill="none" stroke="#d2cec0" stroke-width="3.2" stroke-linecap="butt"/><path d="M890 400L940 399" fill="none" stroke="#fbfaf4" stroke-width="2.2"/><path d="M919 212L929 330" fill="none" stroke="#d2cec0" stroke-width="3.2" stroke-linecap="butt"/><path d="M919 212L929 330" fill="none" stroke="#fbfaf4" stroke-width="2.2"/><path d="M891 212L892 412" fill="none" stroke="#d2cec0" stroke-width="3.2" stroke-linecap="butt"/><path d="M891 212L892 412" fill="none" stroke="#fbfaf4" stroke-width="2.2"/><path d="M1035.5 330V412" fill="none" stroke="#d2cec0" stroke-width="3.2" stroke-linecap="butt"/><path d="M1035.5 330V412" fill="none" stroke="#fbfaf4" stroke-width="2.2"/><path d="M1013 212L1014 252" fill="none" stroke="#d2cec0" stroke-width="3.2" stroke-linecap="butt"/><path d="M1013 212L1014 252" fill="none" stroke="#fbfaf4" stroke-width="2.2"/><path d="M1050 330V352" fill="none" stroke="#d2cec0" stroke-width="3.2" stroke-linecap="butt"/><path d="M1050 330V352" fill="none" stroke="#fbfaf4" stroke-width="2.2"/><path d="M905.5 386V412" fill="none" stroke="#d2cec0" stroke-width="3.2" stroke-linecap="butt"/><path d="M905.5 386V412" fill="none" stroke="#fbfaf4" stroke-width="2.2"/><path d="M888 409L925 405.5Q945 399 958 391.5Q968 387.8 985 388.5Q995 389.5 1003 394L1060 392.5" fill="none" stroke="#d99c80" stroke-width="4.2"/><path d="M888 409L925 405.5Q945 399 958 391.5Q968 387.8 985 388.5Q995 389.5 1003 394L1060 392.5" fill="none" stroke="#f0b89c" stroke-width="2.6"/><path d="M888 414L1060 398.5" fill="none" stroke="#d99c80" stroke-width="7"/><path d="M888 414L1060 398.5" fill="none" stroke="#e9a586" stroke-width="5.2"/><path d="M957.5 211L970.5 412" fill="none" stroke="#e8b89c" stroke-width="3.0"/><path d="M957.5 211L970.5 412" fill="none" stroke="#f8dccb" stroke-width="1.2"/><rect x="967.5" y="402.5" width="7" height="7" rx="1" fill="#fff" stroke="#999" stroke-width="0.6"/><text x="971" y="408.2" font-size="4.5" font-family="Liberation Sans" text-anchor="middle" fill="#333">27</text><text x="981" y="237.8" font-size="7.8" font-family="Liberation Sans" font-weight="bold" fill="#222" text-anchor="middle" transform="rotate(0 981 237.8)" letter-spacing="0.3">North</text><text x="981" y="247" font-size="7.8" font-family="Liberation Sans" font-weight="bold" fill="#222" text-anchor="middle" transform="rotate(0 981 247)" letter-spacing="0.3">Patchogue</text><text x="927" y="280.6" font-size="6.6" font-family="Liberation Sans" font-weight="bold" fill="#68676a" text-anchor="middle" transform="rotate(-7 927 280.6)" letter-spacing="0.3">Sharp St</text><text x="912.5" y="303.8" font-size="6.6" font-family="Liberation Sans" font-weight="bold" fill="#68676a" text-anchor="middle" transform="rotate(-5 912.5 303.8)" letter-spacing="0.3">Everett St</text><text x="928" y="318.3" font-size="6.6" font-family="Liberation Sans" font-weight="bold" fill="#68676a" text-anchor="middle" transform="rotate(-5 928 318.3)" letter-spacing="0.3">Harris St</text><text x="1029" y="327.8" font-size="6.6" font-family="Liberation Sans" font-weight="bold" fill="#68676a" text-anchor="middle" transform="rotate(-4 1029 327.8)" letter-spacing="0.3">Saxton St</text><text x="927" y="350.6" font-size="6.6" font-family="Liberation Sans" font-weight="bold" fill="#68676a" text-anchor="middle" transform="rotate(5 927 350.6)" letter-spacing="0.3">Herbert Cir</text><text x="941.5" y="366.3" font-size="6.6" font-family="Liberation Sans" font-weight="bold" fill="#68676a" text-anchor="middle" transform="rotate(-5 941.5 366.3)" letter-spacing="0.3">Terry Rd</text><text x="1016" y="370.8" font-size="6.6" font-family="Liberation Sans" font-weight="bold" fill="#68676a" text-anchor="middle" transform="rotate(-3 1016 370.8)" letter-spacing="0.3">Clark St</text><text x="938" y="385.6" font-size="6.6" font-family="Liberation Sans" font-weight="bold" fill="#68676a" text-anchor="middle" transform="rotate(-4 938 385.6)" letter-spacing="0.3">Lincoln Rd</text><text x="907" y="401.5" font-size="6.6" font-family="Liberation Sans" font-weight="bold" fill="#68676a" text-anchor="middle" transform="rotate(-4 907 401.5)" letter-spacing="0.3">Sinn St</text><text x="938" y="216" font-size="6.6" font-family="Liberation Sans" font-weight="bold" fill="#68676a" text-anchor="middle" transform="rotate(-3 938 216)" letter-spacing="0.3">Katy St</text><text x="910" y="256" font-size="6.6" font-family="Liberation Sans" font-weight="bold" fill="#68676a" text-anchor="middle" transform="rotate(-86 910 256)" letter-spacing="0.3">Louis Ave</text><text x="1039.5" y="361" font-size="6.6" font-family="Liberation Sans" font-weight="bold" fill="#68676a" text-anchor="middle" transform="rotate(-90 1039.5 361)" letter-spacing="0.3">Ananias Ave</text><text x="920.5" y="224" font-size="6.6" font-family="Liberation Sans" font-weight="bold" fill="#68676a" text-anchor="middle" transform="rotate(-90 920.5 224)" letter-spacing="0.3">n Ave</text><text x="960" y="227" font-size="6.6" font-family="Liberation Sans" font-weight="bold" fill="#68676a" text-anchor="middle" transform="rotate(-86 960 227)" letter-spacing="0.3">Medford</text><text x="893.5" y="300" font-size="6.6" font-family="Liberation Sans" font-weight="bold" fill="#68676a" text-anchor="middle" transform="rotate(-90 893.5 300)" letter-spacing="0.3">N</text><path d="M978.30 317.50L971.97 310.62A8.6 8.6 0 1 1 984.63 310.62Z" fill="#7cd75a" fill-opacity="0.35" stroke="#6fd24b" stroke-width="2.3"/><path d="M970.00 328.20L962.40 313.82A8.6 8.6 0 1 1 977.60 313.82Z" fill="#6fd24b" stroke="#66cc44" stroke-width="1"/><g fill="none" stroke="#a6e68c" stroke-width="0.7" opacity="0.8"><path d="M964 306Q967 302 971 302M965 312Q964 316 966 318M970 322L974 318M972 307Q975 309 973 313"/></g></g><rect x="895.6" y="216.8" width="12.4" height="27.4" rx="2" fill="#ee5a1e" stroke="#b33a0c" stroke-width="0.6"/><rect x="895.6" y="230.4" width="12.4" height="1" fill="#7a2a0a"/><path d="M899.3 223.5H904.3M901.8 221V226M899.3 237.8H904.3" stroke="#fff" stroke-width="1.2"/><rect x="1042" y="394" width="12.6" height="12.8" rx="2" fill="#ee5a1e" stroke="#b33a0c" stroke-width="0.6"/><path d="M1048.3 399.2V404.2" stroke="#fff" stroke-width="1.5"/><circle cx="1048.3" cy="397.2" r="0.9" fill="#fff"/></svg>
<div class="p" style="left:8px;top:447px;width:128px;height:147px"></div>
<div class="p" style="left:140px;top:447px;width:128px;height:147px"></div>
<div class="p" style="left:272px;top:447px;width:304px;height:147px"></div>
<div class="p" style="left:581px;top:447px;width:481px;height:452px"></div>
<div class="p" style="left:8px;top:600px;width:128px;height:147px"></div>
<div class="p" style="left:140px;top:600px;width:128px;height:147px"></div>
<div class="p" style="left:272px;top:600px;width:304px;height:147px"></div>
<div class="p" style="left:8px;top:752px;width:128px;height:147px"></div>
<div class="p" style="left:140px;top:752px;width:128px;height:147px"></div>
<div class="p" style="left:272px;top:752px;width:304px;height:147px"></div>
<div class="a" style="left:14.40px;top:454.04px;width:94.49px;overflow:hidden;font-size:9.7px;font-weight:bold;color:#eceef2;transform:scaleX(0.925);transform-origin:left;">Average Charge Cc</div>
<svg style="left:103.8px;top:454.3px" width="10" height="10" viewBox="0 0 10 10"><circle cx="5" cy="5" r="4.3" fill="none" stroke="#dfe1e6" stroke-width="1.1"/><path d="M5 3.3V6.9" stroke="#9a9ea8" stroke-width="1.1"/></svg>
<div class="a" style="left:146.30px;top:454.04px;width:126.32px;overflow:hidden;font-size:9.7px;font-weight:bold;color:#eceef2;transform:scaleX(0.95);transform-origin:left;">Demand Estimate - This</div>
<div class="a" style="left:278.80px;top:454.04px;width:72.32px;overflow:hidden;font-size:9.7px;font-weight:bold;color:#eceef2;transform:scaleX(0.925);transform-origin:left;">Energy Costs</div>
<svg style="left:347.7px;top:454.3px" width="10" height="10" viewBox="0 0 10 10"><circle cx="5" cy="5" r="4.3" fill="none" stroke="#dfe1e6" stroke-width="1.1"/><path d="M5 3.3V6.9" stroke="#9a9ea8" stroke-width="1.1"/></svg>
<div class="a" style="left:587.70px;top:454.04px;width:90.27px;overflow:hidden;font-size:9.7px;font-weight:bold;color:#eceef2;transform:scaleX(0.925);transform-origin:left;">Station Summary</div>
<svg style="left:673.2px;top:454.3px" width="10" height="10" viewBox="0 0 10 10"><circle cx="5" cy="5" r="4.3" fill="none" stroke="#dfe1e6" stroke-width="1.1"/><path d="M5 3.3V6.9" stroke="#9a9ea8" stroke-width="1.1"/></svg>
<div class="a" style="left:14.40px;top:606.04px;width:94.49px;overflow:hidden;font-size:9.7px;font-weight:bold;color:#eceef2;transform:scaleX(0.925);transform-origin:left;">Average Charge Tir</div>
<svg style="left:103.8px;top:606.3px" width="10" height="10" viewBox="0 0 10 10"><circle cx="5" cy="5" r="4.3" fill="none" stroke="#dfe1e6" stroke-width="1.1"/><path d="M5 3.3V6.9" stroke="#9a9ea8" stroke-width="1.1"/></svg>
<div class="a" style="left:146.30px;top:606.04px;width:94.16px;overflow:hidden;font-size:9.7px;font-weight:bold;color:#eceef2;transform:scaleX(0.925);transform-origin:left;">Average Idle Time</div>
<svg style="left:235.4px;top:606.3px" width="10" height="10" viewBox="0 0 10 10"><circle cx="5" cy="5" r="4.3" fill="none" stroke="#dfe1e6" stroke-width="1.1"/><path d="M5 3.3V6.9" stroke="#9a9ea8" stroke-width="1.1"/></svg>
<div class="a" style="left:278.80px;top:606.04px;width:70.16px;overflow:hidden;font-size:9.7px;font-weight:bold;color:#eceef2;transform:scaleX(0.925);transform-origin:left;">EVs Charged</div>
<svg style="left:345.7px;top:606.3px" width="10" height="10" viewBox="0 0 10 10"><circle cx="5" cy="5" r="4.3" fill="none" stroke="#dfe1e6" stroke-width="1.1"/><path d="M5 3.3V6.9" stroke="#9a9ea8" stroke-width="1.1"/></svg>
<div class="a" style="left:14.40px;top:759.04px;width:94.49px;overflow:hidden;font-size:9.7px;font-weight:bold;color:#eceef2;transform:scaleX(0.925);transform-origin:left;">Average Charge En</div>
<svg style="left:103.8px;top:759.3px" width="10" height="10" viewBox="0 0 10 10"><circle cx="5" cy="5" r="4.3" fill="none" stroke="#dfe1e6" stroke-width="1.1"/><path d="M5 3.3V6.9" stroke="#9a9ea8" stroke-width="1.1"/></svg>
<div class="a" style="left:146.30px;top:759.04px;width:95.03px;overflow:hidden;font-size:9.7px;font-weight:bold;color:#eceef2;transform:scaleX(0.925);transform-origin:left;">Energy Comparisor</div>
<svg style="left:236.2px;top:759.3px" width="10" height="10" viewBox="0 0 10 10"><circle cx="5" cy="5" r="4.3" fill="none" stroke="#dfe1e6" stroke-width="1.1"/><path d="M5 3.3V6.9" stroke="#9a9ea8" stroke-width="1.1"/></svg>
<div class="a" style="left:278.80px;top:759.04px;width:42.38px;overflow:hidden;font-size:9.7px;font-weight:bold;color:#eceef2;transform:scaleX(0.925);transform-origin:left;">Energy</div>
<svg style="left:320px;top:759.3px" width="10" height="10" viewBox="0 0 10 10"><circle cx="5" cy="5" r="4.3" fill="none" stroke="#dfe1e6" stroke-width="1.1"/><path d="M5 3.3V6.9" stroke="#9a9ea8" stroke-width="1.1"/></svg>
<svg style="left:0;top:0" width="1068" height="906"><path d="M21.43 568.70A54.7 54.7 0 1 1 123.57 568.70L104.62 561.43A34.400000000000006 34.400000000000006 0 1 0 40.38 561.43Z" fill="#002342"/><path d="M21.43 568.70A54.7 54.7 0 0 1 19.06 537.45L38.89 541.77A34.400000000000006 34.400000000000006 0 0 0 40.38 561.43Z" fill="#fd4f16"/></svg>
<div class="a" style="left:-228.80px;width:600px;text-align:center;top:546.39px;font-size:23px;font-weight:bold;color:#fd4f16;transform:scaleX(0.93);transform-origin:center;">$1.20</div>
<div class="a" style="left:104px;width:200px;text-align:center;top:510.4px;font-size:42.2px;font-weight:normal;color:#fd4f16;-webkit-text-stroke:0.9px #fd4f16">$664</div>
<svg style="left:0;top:0" width="1068" height="906"><path d="M21.43 721.50A54.7 54.7 0 1 1 123.57 721.50L104.62 714.23A34.400000000000006 34.400000000000006 0 1 0 40.38 714.23Z" fill="#002342"/><path d="M21.43 721.50A54.7 54.7 0 0 1 23.18 678.25L41.48 687.03A34.400000000000006 34.400000000000006 0 0 0 40.38 714.23Z" fill="#22a0d8"/></svg>
<div class="a" style="left:-228.60px;width:600px;text-align:center;top:699.95px;font-size:13.5px;font-weight:bold;color:#22a0d8;transform:scaleX(0.874);transform-origin:center;">1.69 hours</div>
<svg style="left:0;top:0" width="1068" height="906"><path d="M153.43 721.50A54.7 54.7 0 1 1 255.57 721.50L236.62 714.23A34.400000000000006 34.400000000000006 0 1 0 172.38 714.23Z" fill="#002342"/><path d="M153.43 721.50A54.7 54.7 0 0 1 166.23 662.82L180.43 677.32A34.400000000000006 34.400000000000006 0 0 0 172.38 714.23Z" fill="#22a0d8"/></svg>
<div class="a" style="left:-96.40px;width:600px;text-align:center;top:699.95px;font-size:13.5px;font-weight:bold;color:#22a0d8;transform:scaleX(0.874);transform-origin:center;">2.38 hours</div>
<svg style="left:0;top:0" width="1068" height="906"><path d="M21.43 873.80A54.7 54.7 0 1 1 123.57 873.80L104.62 866.53A34.400000000000006 34.400000000000006 0 1 0 40.38 866.53Z" fill="#002342"/><path d="M21.43 873.80A54.7 54.7 0 0 1 47.97 805.31L57.08 823.45A34.400000000000006 34.400000000000006 0 0 0 40.38 866.53Z" fill="#72d54a"/></svg>
<div class="a" style="left:-228.50px;width:600px;text-align:center;top:853.65px;font-size:13.5px;font-weight:bold;color:#72d54a;transform:scaleX(0.97);transform-origin:center;">7.57 kWh</div>
<svg style="left:0;top:0" width="1068" height="906"><rect x="300.10" y="480" width="1" height="63.7" fill="rgba(140,160,170,0.17)"/><rect x="335.94" y="480" width="1" height="63.7" fill="rgba(140,160,170,0.17)"/><rect x="371.78" y="480" width="1" height="63.7" fill="rgba(140,160,170,0.17)"/><rect x="407.62" y="480" width="1" height="63.7" fill="rgba(140,160,170,0.17)"/><rect x="443.46" y="480" width="1" height="63.7" fill="rgba(140,160,170,0.17)"/><rect x="479.30" y="480" width="1" height="63.7" fill="rgba(140,160,170,0.17)"/><rect x="515.14" y="480" width="1" height="63.7" fill="rgba(140,160,170,0.17)"/><rect x="550.98" y="480" width="1" height="63.7" fill="rgba(140,160,170,0.17)"/><rect x="294.7" y="510.70" width="269.8" height="1" fill="rgba(140,160,170,0.17)"/><rect x="294.7" y="543.20" width="269.8" height="1" fill="rgba(140,160,170,0.17)"/><path d="M294.90 522.30L296.20 502.10L298.30 514.30L300.40 513.90L302.10 508.00L303.80 503.00L305.50 503.00L307.20 511.40L308.90 512.20L311.00 509.70L313.10 497.10L315.20 503.00L316.40 513.10L319.80 513.50L322.30 512.20L324.00 519.80L325.70 511.40L328.70 505.50L330.30 513.10L332.40 524.00L334.10 511.40L336.70 505.50L340.90 494.50L343.40 507.20L345.90 508.00L349.30 492.90L352.70 510.50L356.00 508.00L359.40 499.60L361.90 510.50L364.50 509.70L367.00 502.10L370.40 509.70L372.90 507.20L377.10 491.20L379.60 509.70L383.40 509.70L385.10 513.90L387.20 518.10L388.40 510.50L391.80 510.50L393.50 523.20L395.60 527.00L397.30 513.90L400.20 510.50L401.90 498.80L405.30 519.00L407.80 511.40L410.30 498.30L413.70 508.00L415.00 517.30L417.10 513.10L419.60 500.40L423.00 516.40L425.50 513.10L428.90 501.30L430.60 501.30L432.70 516.40L433.90 511.40L438.10 494.50L441.10 519.00L444.00 511.40L446.60 508.90L449.90 524.90L452.50 513.10L455.00 513.90L458.40 529.90L460.90 514.80L465.10 503.80L468.00 517.20L471.70 511.60L474.10 486.30L475.50 502.20L477.40 518.10L480.20 513.50L483.00 503.20L485.80 503.20L488.10 515.30L491.90 498.90L494.20 500.30L496.10 513.50L498.90 514.40L500.30 497.10L503.60 500.30L505.50 509.70L509.20 506.00L511.10 512.50L513.40 527.00L515.80 512.50L518.60 510.60L521.80 520.90L524.20 513.50L527.00 510.60L528.40 494.30L530.70 505.00L533.50 501.30L536.80 495.70L538.20 504.10L540.10 519.10L541.90 502.20L545.70 494.70L548.50 514.40L552.30 500.30L555.50 493.80L558.40 515.30L560.70 506.90L563.00 500.30L564.40 522.80L564.40 543.70L294.90 543.70Z" fill="rgba(40,162,220,0.07)"/><path d="M302.20 507.71L303.40 501.50L304.20 501.50L305.40 503.00M347.70 500.01L348.90 489.50L349.70 489.50L350.90 501.18M357.80 503.55L359.00 496.20L359.80 496.20L361.00 506.58M365.40 506.96L366.60 493.70L367.40 493.70L368.60 505.68M375.50 497.30L376.70 489.50L377.50 489.50L378.70 503.04M400.30 509.81L401.50 493.70L402.30 493.70L403.50 508.31M408.70 506.68L409.90 490.70L410.70 490.70L411.90 502.86M418.00 508.53L419.20 499.00L420.00 499.00L421.20 507.93M429.00 501.30L430.20 489.90L431.00 489.90L432.20 512.80M442.40 515.59L443.60 509.50L444.40 509.50L445.60 509.86M463.50 507.99L464.70 498.80L465.50 498.80L466.70 511.19M473.90 488.41L475.10 493.00L475.90 493.00L477.10 515.59M517.00 511.69L518.20 508.50L519.00 508.50L520.20 515.75M522.60 518.43L523.80 509.50L524.60 509.50L525.80 511.84M526.80 510.81L528.00 492.50L528.80 492.50L530.00 501.74M535.20 498.42L536.40 495.00L537.20 495.00L538.40 505.68M544.10 497.86L545.30 489.10L546.10 489.10L547.30 505.96M553.90 497.05L555.10 487.70L555.90 487.70L557.10 505.66" fill="#fd4f16" stroke="#fd4f16" stroke-width="1.2" stroke-linejoin="round"/><path d="M294.90 522.30L296.20 502.10L298.30 514.30L300.40 513.90L302.10 508.00L303.80 503.00L305.50 503.00L307.20 511.40L308.90 512.20L311.00 509.70L313.10 497.10L315.20 503.00L316.40 513.10L319.80 513.50L322.30 512.20L324.00 519.80L325.70 511.40L328.70 505.50L330.30 513.10L332.40 524.00L334.10 511.40L336.70 505.50L340.90 494.50L343.40 507.20L345.90 508.00L349.30 492.90L352.70 510.50L356.00 508.00L359.40 499.60L361.90 510.50L364.50 509.70L367.00 502.10L370.40 509.70L372.90 507.20L377.10 491.20L379.60 509.70L383.40 509.70L385.10 513.90L387.20 518.10L388.40 510.50L391.80 510.50L393.50 523.20L395.60 527.00L397.30 513.90L400.20 510.50L401.90 498.80L405.30 519.00L407.80 511.40L410.30 498.30L413.70 508.00L415.00 517.30L417.10 513.10L419.60 500.40L423.00 516.40L425.50 513.10L428.90 501.30L430.60 501.30L432.70 516.40L433.90 511.40L438.10 494.50L441.10 519.00L444.00 511.40L446.60 508.90L449.90 524.90L452.50 513.10L455.00 513.90L458.40 529.90L460.90 514.80L465.10 503.80L468.00 517.20L471.70 511.60L474.10 486.30L475.50 502.20L477.40 518.10L480.20 513.50L483.00 503.20L485.80 503.20L488.10 515.30L491.90 498.90L494.20 500.30L496.10 513.50L498.90 514.40L500.30 497.10L503.60 500.30L505.50 509.70L509.20 506.00L511.10 512.50L513.40 527.00L515.80 512.50L518.60 510.60L521.80 520.90L524.20 513.50L527.00 510.60L528.40 494.30L530.70 505.00L533.50 501.30L536.80 495.70L538.20 504.10L540.10 519.10L541.90 502.20L545.70 494.70L548.50 514.40L552.30 500.30L555.50 493.80L558.40 515.30L560.70 506.90L563.00 500.30L564.40 522.80" fill="none" stroke="#28a2dc" stroke-width="1.5" stroke-linejoin="round"/><path d="M294.70 543.70L293.90 543.70L294.90 538.00L295.90 538.00L296.90 543.70L302.30 543.70L303.30 538.00L304.30 538.00L305.30 543.70L347.00 543.70L348.00 537.00L349.00 537.00L350.00 543.70L357.10 543.70L358.10 537.00L359.10 537.00L360.10 543.70L365.50 543.70L366.50 536.00L367.50 536.00L368.50 543.70L368.00 543.70L369.00 537.00L370.00 537.00L371.00 543.70L375.60 543.70L376.60 536.00L377.60 536.00L378.60 543.70L401.70 543.70L402.70 532.50L403.70 532.50L404.70 543.70L410.10 543.70L411.10 532.50L412.10 532.50L413.10 543.70L420.60 543.70L421.60 533.00L422.60 533.00L423.60 543.70L429.10 543.70L430.10 533.00L431.10 533.00L432.10 543.70L464.50 543.70L465.50 532.50L466.50 532.50L467.50 543.70L472.60 543.70L473.60 532.20L474.60 532.20L475.60 543.70L481.90 543.70L482.90 536.90L483.90 536.90L484.90 543.70L526.00 543.70L527.00 537.80L528.00 537.80L529.00 543.70L536.70 543.70L537.70 540.10L538.70 540.10L539.70 543.70L545.20 543.70L546.20 535.90L547.20 535.90L548.20 543.70L555.00 543.70L556.00 532.20L557.00 532.20L558.00 543.70L564.50 543.70" fill="none" stroke="#72d54a" stroke-width="1.4" stroke-linejoin="round"/><path d="M294.70 543.70L336.30 543.70L337.00 541.50L338.00 541.50L338.70 543.70L359.50 543.70L360.20 535.00L361.20 535.00L361.90 543.70L431.90 543.70L432.60 532.50L433.60 532.50L434.30 543.70L442.80 543.70L443.50 537.50L444.50 537.50L445.20 543.70L518.80 543.70L519.50 525.10L520.50 525.10L521.20 543.70L522.00 543.70L522.70 525.10L523.70 525.10L524.40 543.70L546.40 543.70L547.10 539.70L548.10 539.70L548.80 543.70L564.50 543.70" fill="none" stroke="#ff8c1a" stroke-width="1.4" stroke-linejoin="round"/></svg>
<div class="a" style="right:776.50px;top:507.20px;font-size:8.5px;font-weight:bold;color:#e2e4ea;">$5</div>
<div class="a" style="right:776.50px;top:539.71px;font-size:8.5px;font-weight:bold;color:#e2e4ea;">$0</div>
<div class="a" style="left:-0.20px;width:600px;text-align:center;top:549.50px;font-size:8.3px;font-weight:bold;color:#e2e4ea;">02/27</div>
<div class="a" style="left:35.64px;width:600px;text-align:center;top:549.50px;font-size:8.3px;font-weight:bold;color:#e2e4ea;">03/03</div>
<div class="a" style="left:71.48px;width:600px;text-align:center;top:549.50px;font-size:8.3px;font-weight:bold;color:#e2e4ea;">03/07</div>
<div class="a" style="left:107.32px;width:600px;text-align:center;top:549.50px;font-size:8.3px;font-weight:bold;color:#e2e4ea;">03/11</div>
<div class="a" style="left:143.16px;width:600px;text-align:center;top:549.50px;font-size:8.3px;font-weight:bold;color:#e2e4ea;">03/15</div>
<div class="a" style="left:179.00px;width:600px;text-align:center;top:549.50px;font-size:8.3px;font-weight:bold;color:#e2e4ea;">03/19</div>
<div class="a" style="left:214.84px;width:600px;text-align:center;top:549.50px;font-size:8.3px;font-weight:bold;color:#e2e4ea;">03/23</div>
<div class="a" style="left:250.68px;width:600px;text-align:center;top:549.50px;font-size:8.3px;font-weight:bold;color:#e2e4ea;">03/27</div>
<svg style="left:0;top:0" width="1068" height="906"><rect x="295.10" y="632.4" width="1" height="79.6" fill="rgba(140,160,170,0.17)"/><rect x="331.70" y="632.4" width="1" height="79.6" fill="rgba(140,160,170,0.17)"/><rect x="368.30" y="632.4" width="1" height="79.6" fill="rgba(140,160,170,0.17)"/><rect x="404.90" y="632.4" width="1" height="79.6" fill="rgba(140,160,170,0.17)"/><rect x="441.50" y="632.4" width="1" height="79.6" fill="rgba(140,160,170,0.17)"/><rect x="478.10" y="632.4" width="1" height="79.6" fill="rgba(140,160,170,0.17)"/><rect x="514.70" y="632.4" width="1" height="79.6" fill="rgba(140,160,170,0.17)"/><rect x="551.30" y="632.4" width="1" height="79.6" fill="rgba(140,160,170,0.17)"/><rect x="290.2" y="631.90" width="274.3" height="1" fill="rgba(140,160,170,0.17)"/><rect x="290.2" y="671.90" width="274.3" height="1" fill="rgba(140,160,170,0.17)"/><rect x="290.2" y="711.50" width="274.3" height="1" fill="rgba(140,160,170,0.17)"/><path d="M331.40 712.00L332.00 692.10L333.40 692.10L334.00 712.00M356.60 712.00L357.20 692.10L358.60 692.10L359.20 712.00M429.40 712.00L430.00 692.10L431.40 692.10L432.00 712.00M495.40 712.00L496.00 692.10L497.40 692.10L498.00 712.00M517.90 712.00L518.50 692.10L519.90 692.10L520.50 712.00M521.40 712.00L522.00 692.10L523.40 692.10L524.00 712.00M546.60 712.00L547.20 692.10L548.60 692.10L549.20 712.00" fill="none" stroke="#72d54a" stroke-width="1.4" stroke-linejoin="round"/><path d="M289.60 712.00L290.20 692.10L291.60 692.10L292.20 712.00M297.40 712.00L298.00 692.10L299.40 692.10L300.00 712.00M343.80 712.00L344.40 692.10L345.80 692.10L346.40 712.00M354.50 712.00L355.10 692.10L356.50 692.10L357.10 712.00M362.50 712.00L363.10 692.10L364.50 692.10L365.10 712.00M370.30 712.00L370.90 692.10L372.30 692.10L372.90 712.00M373.40 712.00L374.00 692.10L375.40 692.10L376.00 712.00M398.20 712.00L398.80 692.10L400.20 692.10L400.80 712.00M408.60 712.00L409.20 692.10L410.60 692.10L411.20 712.00M418.70 712.00L419.30 692.10L420.70 692.10L421.30 712.00M425.00 712.00L425.60 692.10L427.00 692.10L427.60 712.00M427.40 712.00L428.00 672.20L429.40 672.20L430.00 712.00M440.50 712.00L441.10 692.10L442.50 692.10L443.10 712.00M463.30 712.00L463.90 692.10L465.30 692.10L465.90 712.00M472.10 712.00L472.70 652.30L474.10 652.30L474.70 712.00M481.40 712.00L482.00 692.10L483.40 692.10L484.00 712.00M526.70 712.00L527.30 692.10L528.70 692.10L529.30 712.00M537.80 712.00L538.40 692.10L539.80 692.10L540.40 712.00M545.70 712.00L546.30 692.10L547.70 692.10L548.30 712.00M554.50 712.00L555.10 692.10L556.50 692.10L557.10 712.00M556.50 712.00L557.10 692.10L558.50 692.10L559.10 712.00" fill="none" stroke="#28a2dc" stroke-width="1.4" stroke-linejoin="round"/><rect x="290.2" y="711.20" width="274.3" height="1.6" fill="#28a2dc"/></svg>
<div class="a" style="right:781.70px;top:628.40px;font-size:8.5px;font-weight:bold;color:#e2e4ea;">4</div>
<div class="a" style="right:781.70px;top:668.40px;font-size:8.5px;font-weight:bold;color:#e2e4ea;">2</div>
<div class="a" style="right:781.70px;top:708.00px;font-size:8.5px;font-weight:bold;color:#e2e4ea;">0</div>
<div class="a" style="left:-4.70px;width:600px;text-align:center;top:718.50px;font-size:8.3px;font-weight:bold;color:#e2e4ea;">02/27</div>
<div class="a" style="left:31.90px;width:600px;text-align:center;top:718.50px;font-size:8.3px;font-weight:bold;color:#e2e4ea;">03/03</div>
<div class="a" style="left:68.50px;width:600px;text-align:center;top:718.50px;font-size:8.3px;font-weight:bold;color:#e2e4ea;">03/07</div>
<div class="a" style="left:105.10px;width:600px;text-align:center;top:718.50px;font-size:8.3px;font-weight:bold;color:#e2e4ea;">03/11</div>
<div class="a" style="left:141.70px;width:600px;text-align:center;top:718.50px;font-size:8.3px;font-weight:bold;color:#e2e4ea;">03/15</div>
<div class="a" style="left:178.30px;width:600px;text-align:center;top:718.50px;font-size:8.3px;font-weight:bold;color:#e2e4ea;">03/19</div>
<div class="a" style="left:214.90px;width:600px;text-align:center;top:718.50px;font-size:8.3px;font-weight:bold;color:#e2e4ea;">03/23</div>
<div class="a" style="left:251.50px;width:600px;text-align:center;top:718.50px;font-size:8.3px;font-weight:bold;color:#e2e4ea;">03/27</div>
<svg style="left:0;top:0" width="1068" height="906"><rect x="316.50" y="785" width="1" height="63.7" fill="rgba(140,160,170,0.17)"/><rect x="350.18" y="785" width="1" height="63.7" fill="rgba(140,160,170,0.17)"/><rect x="383.86" y="785" width="1" height="63.7" fill="rgba(140,160,170,0.17)"/><rect x="417.54" y="785" width="1" height="63.7" fill="rgba(140,160,170,0.17)"/><rect x="451.22" y="785" width="1" height="63.7" fill="rgba(140,160,170,0.17)"/><rect x="484.90" y="785" width="1" height="63.7" fill="rgba(140,160,170,0.17)"/><rect x="518.58" y="785" width="1" height="63.7" fill="rgba(140,160,170,0.17)"/><rect x="552.26" y="785" width="1" height="63.7" fill="rgba(140,160,170,0.17)"/><rect x="313.3" y="805.30" width="251.2" height="1" fill="rgba(140,160,170,0.17)"/><rect x="313.3" y="826.30" width="251.2" height="1" fill="rgba(140,160,170,0.17)"/><rect x="313.3" y="848.20" width="251.2" height="1" fill="rgba(140,160,170,0.17)"/><path d="M313.49 826.10L314.70 804.77L316.65 817.65L318.61 817.23L320.19 811.00L321.77 805.72L323.36 805.72L324.94 814.59L326.52 815.44L328.48 812.80L330.43 799.49L332.39 805.72L333.50 816.39L336.67 816.81L339.00 815.44L340.58 823.46L342.16 814.59L344.96 808.36L346.45 816.39L348.40 827.90L349.98 814.59L352.40 808.36L356.31 796.74L358.64 810.16L360.97 811.00L364.14 795.06L367.30 813.64L370.37 811.00L373.54 802.13L375.87 813.64L378.29 812.80L380.62 804.77L383.78 812.80L386.11 810.16L390.02 793.26L392.35 812.80L395.89 812.80L397.47 817.23L399.42 821.67L400.54 813.64L403.71 813.64L405.29 827.05L407.24 831.06L408.83 817.23L411.53 813.64L413.11 801.29L416.28 822.62L418.60 814.59L420.93 800.76L424.10 811.00L425.31 820.82L427.26 816.39L429.59 802.98L432.76 819.87L435.08 816.39L438.25 803.93L439.83 803.93L441.79 819.87L442.90 814.59L446.81 796.74L449.61 822.62L452.31 814.59L454.73 811.95L457.80 828.85L460.22 816.39L462.55 817.23L465.71 834.13L468.04 818.18L471.95 806.57L474.65 820.72L478.10 814.80L480.33 788.09L481.64 804.88L483.40 821.67L486.01 816.81L488.62 805.93L491.23 805.93L493.37 818.71L496.91 801.39L499.05 802.87L500.82 816.81L503.42 817.76L504.73 799.49L507.80 802.87L509.57 812.80L513.01 808.89L514.78 815.75L516.92 831.06L519.16 815.75L521.76 813.75L524.74 824.62L526.98 816.81L529.59 813.75L530.89 796.53L533.03 807.83L535.64 803.93L538.71 798.01L540.01 806.88L541.78 822.72L543.46 804.88L547.00 796.96L549.60 817.76L553.14 802.87L556.12 796.01L558.82 818.71L560.96 809.84L563.10 802.87L564.41 826.63L564.41 848.70L313.49 848.70Z" fill="rgba(40,162,220,0.07)"/><path d="M320.28 810.69L321.40 804.14L322.15 804.14L323.26 805.72M362.65 802.56L363.76 791.46L364.51 791.46L365.63 803.80M372.05 806.30L373.17 798.54L373.91 798.54L375.03 809.50M379.13 809.91L380.24 795.90L380.99 795.90L382.11 808.55M388.53 799.70L389.65 791.46L390.39 791.46L391.51 805.76M411.62 812.91L412.74 795.90L413.48 795.90L414.60 811.32M419.44 809.61L420.56 792.73L421.30 792.73L422.42 805.58M428.10 811.56L429.22 801.50L429.96 801.50L431.08 810.93M438.34 803.93L439.46 791.89L440.20 791.89L441.32 816.07M450.82 819.02L451.93 812.58L452.68 812.58L453.80 812.97M470.46 810.99L471.58 801.29L472.33 801.29L473.44 814.37M480.15 790.31L481.26 795.16L482.01 795.16L483.13 819.02M520.27 814.89L521.39 811.53L522.14 811.53L523.25 819.18M525.49 822.02L526.61 812.58L527.35 812.58L528.47 815.06M529.40 813.97L530.52 794.63L531.26 794.63L532.38 804.39M537.22 800.88L538.34 797.27L539.08 797.27L540.20 808.55M545.51 800.29L546.62 791.04L547.37 791.04L548.49 808.84M554.63 799.44L555.75 789.56L556.49 789.56L557.61 808.53" fill="#fd4f16" stroke="#fd4f16" stroke-width="1.2" stroke-linejoin="round"/><path d="M313.49 826.10L314.70 804.77L316.65 817.65L318.61 817.23L320.19 811.00L321.77 805.72L323.36 805.72L324.94 814.59L326.52 815.44L328.48 812.80L330.43 799.49L332.39 805.72L333.50 816.39L336.67 816.81L339.00 815.44L340.58 823.46L342.16 814.59L344.96 808.36L346.45 816.39L348.40 827.90L349.98 814.59L352.40 808.36L356.31 796.74L358.64 810.16L360.97 811.00L364.14 795.06L367.30 813.64L370.37 811.00L373.54 802.13L375.87 813.64L378.29 812.80L380.62 804.77L383.78 812.80L386.11 810.16L390.02 793.26L392.35 812.80L395.89 812.80L397.47 817.23L399.42 821.67L400.54 813.64L403.71 813.64L405.29 827.05L407.24 831.06L408.83 817.23L411.53 813.64L413.11 801.29L416.28 822.62L418.60 814.59L420.93 800.76L424.10 811.00L425.31 820.82L427.26 816.39L429.59 802.98L432.76 819.87L435.08 816.39L438.25 803.93L439.83 803.93L441.79 819.87L442.90 814.59L446.81 796.74L449.61 822.62L452.31 814.59L454.73 811.95L457.80 828.85L460.22 816.39L462.55 817.23L465.71 834.13L468.04 818.18L471.95 806.57L474.65 820.72L478.10 814.80L480.33 788.09L481.64 804.88L483.40 821.67L486.01 816.81L488.62 805.93L491.23 805.93L493.37 818.71L496.91 801.39L499.05 802.87L500.82 816.81L503.42 817.76L504.73 799.49L507.80 802.87L509.57 812.80L513.01 808.89L514.78 815.75L516.92 831.06L519.16 815.75L521.76 813.75L524.74 824.62L526.98 816.81L529.59 813.75L530.89 796.53L533.03 807.83L535.64 803.93L538.71 798.01L540.01 806.88L541.78 822.72L543.46 804.88L547.00 796.96L549.60 817.76L553.14 802.87L556.12 796.01L558.82 818.71L560.96 809.84L563.10 802.87L564.41 826.63" fill="none" stroke="#28a2dc" stroke-width="1.5" stroke-linejoin="round"/><path d="M313.30 848.70L312.56 848.70L313.49 843.00L314.42 843.00L315.35 848.70L320.38 848.70L321.31 843.00L322.24 843.00L323.17 848.70L361.99 848.70L362.93 842.00L363.86 842.00L364.79 848.70L371.40 848.70L372.33 842.00L373.26 842.00L374.19 848.70L379.22 848.70L380.15 841.00L381.08 841.00L382.01 848.70L381.55 848.70L382.48 842.00L383.41 842.00L384.34 848.70L388.62 848.70L389.55 841.00L390.48 841.00L391.42 848.70L412.92 848.70L413.85 837.50L414.79 837.50L415.72 848.70L420.74 848.70L421.68 837.50L422.61 837.50L423.54 848.70L430.52 848.70L431.45 838.00L432.38 838.00L433.31 848.70L438.43 848.70L439.37 838.00L440.30 838.00L441.23 848.70L471.39 848.70L472.33 837.50L473.26 837.50L474.19 848.70L478.94 848.70L479.87 837.20L480.80 837.20L481.73 848.70L487.59 848.70L488.53 841.90L489.46 841.90L490.39 848.70L528.65 848.70L529.59 842.80L530.52 842.80L531.45 848.70L538.62 848.70L539.55 845.10L540.48 845.10L541.41 848.70L546.53 848.70L547.46 840.90L548.39 840.90L549.32 848.70L555.65 848.70L556.59 837.20L557.52 837.20L558.45 848.70L564.50 848.70" fill="none" stroke="#72d54a" stroke-width="1.4" stroke-linejoin="round"/></svg>
<div class="a" style="right:757.60px;top:801.80px;font-size:8.5px;font-weight:bold;color:#e2e4ea;">40 kWh</div>
<div class="a" style="right:757.60px;top:822.80px;font-size:8.5px;font-weight:bold;color:#e2e4ea;">20 kWh</div>
<div class="a" style="right:757.60px;top:844.71px;font-size:8.5px;font-weight:bold;color:#e2e4ea;">0 kWh</div>
<div class="a" style="left:17.00px;width:600px;text-align:center;top:855.10px;font-size:8.3px;font-weight:bold;color:#e2e4ea;">02/27</div>
<div class="a" style="left:50.68px;width:600px;text-align:center;top:855.10px;font-size:8.3px;font-weight:bold;color:#e2e4ea;">03/03</div>
<div class="a" style="left:84.36px;width:600px;text-align:center;top:855.10px;font-size:8.3px;font-weight:bold;color:#e2e4ea;">03/07</div>
<div class="a" style="left:118.04px;width:600px;text-align:center;top:855.10px;font-size:8.3px;font-weight:bold;color:#e2e4ea;">03/11</div>
<div class="a" style="left:151.72px;width:600px;text-align:center;top:855.10px;font-size:8.3px;font-weight:bold;color:#e2e4ea;">03/15</div>
<div class="a" style="left:185.40px;width:600px;text-align:center;top:855.10px;font-size:8.3px;font-weight:bold;color:#e2e4ea;">03/19</div>
<div class="a" style="left:219.08px;width:600px;text-align:center;top:855.10px;font-size:8.3px;font-weight:bold;color:#e2e4ea;">03/23</div>
<div class="a" style="left:252.76px;width:600px;text-align:center;top:855.10px;font-size:8.3px;font-weight:bold;color:#e2e4ea;">03/27</div>
<div class="a" style="left:281.1px;top:564.8px;width:9.2px;height:3.4px;border-radius:1.7px;background:#fd4f16"></div>
<div class="a" style="left:295.30px;top:562.60px;font-size:8.3px;font-weight:bold;color:#e2e4ea;transform:scaleX(0.925);transform-origin:left;">All</div>
<div class="a" style="left:310.10px;top:562.60px;font-size:8.3px;font-weight:bold;color:#e2e4ea;transform:scaleX(0.925);transform-origin:left;">Total: $1.96K</div>
<div class="a" style="left:364.7px;top:564.8px;width:9.2px;height:3.4px;border-radius:1.7px;background:#28a2dc"></div>
<div class="a" style="left:378.50px;top:562.60px;font-size:8.3px;font-weight:bold;color:#e2e4ea;transform:scaleX(0.925);transform-origin:left;">Facility</div>
<div class="a" style="left:410.70px;top:562.60px;font-size:8.3px;font-weight:bold;color:#e2e4ea;transform:scaleX(0.925);transform-origin:left;">Total: $1.93K</div>
<div class="a" style="left:281.1px;top:580.0px;width:9.2px;height:3.4px;border-radius:1.7px;background:#72d54a"></div>
<div class="a" style="left:295.30px;top:577.80px;font-size:8.3px;font-weight:bold;color:#e2e4ea;transform:scaleX(0.925);transform-origin:left;">Chargers</div>
<div class="a" style="left:335.50px;top:577.80px;font-size:8.3px;font-weight:bold;color:#e2e4ea;transform:scaleX(0.925);transform-origin:left;">Total: $45.4</div>
<div class="a" style="left:386.6px;top:580.0px;width:9.2px;height:3.4px;border-radius:1.7px;background:#ff8c1a"></div>
<div class="a" style="left:400.50px;top:577.80px;font-size:8.3px;font-weight:bold;color:#e2e4ea;transform:scaleX(0.925);transform-origin:left;">Charger Revenue</div>
<div class="a" style="left:470.70px;top:577.80px;font-size:8.3px;font-weight:bold;color:#e2e4ea;transform:scaleX(0.925);transform-origin:left;">Total: $10.9</div>
<div class="a" style="left:281.1px;top:732.0px;width:9.2px;height:3.4px;border-radius:1.7px;background:#72d54a"></div>
<div class="a" style="left:295.30px;top:729.80px;font-size:8.3px;font-weight:bold;color:#e2e4ea;transform:scaleX(0.925);transform-origin:left;">Public</div>
<div class="a" style="left:323.20px;top:729.80px;font-size:8.3px;font-weight:bold;color:#e2e4ea;transform:scaleX(0.925);transform-origin:left;">Total: 8</div>
<div class="a" style="left:356.4px;top:732.0px;width:9.2px;height:3.4px;border-radius:1.7px;background:#28a2dc"></div>
<div class="a" style="left:371.20px;top:729.80px;font-size:8.3px;font-weight:bold;color:#e2e4ea;transform:scaleX(0.925);transform-origin:left;">Private</div>
<div class="a" style="left:403.50px;top:729.80px;font-size:8.3px;font-weight:bold;color:#e2e4ea;transform:scaleX(0.925);transform-origin:left;">Total: 30</div>
<div class="a" style="left:281.1px;top:869.8px;width:9.2px;height:3.4px;border-radius:1.7px;background:#fd4f16"></div>
<div class="a" style="left:295.30px;top:867.60px;font-size:8.3px;font-weight:bold;color:#e2e4ea;transform:scaleX(0.925);transform-origin:left;">All</div>
<div class="a" style="left:310.10px;top:867.60px;font-size:8.3px;font-weight:bold;color:#e2e4ea;transform:scaleX(0.925);transform-origin:left;">Total: 12.0 MWh</div>
<div class="a" style="left:376.1px;top:869.8px;width:9.2px;height:3.4px;border-radius:1.7px;background:#28a2dc"></div>
<div class="a" style="left:389.60px;top:867.60px;font-size:8.3px;font-weight:bold;color:#e2e4ea;transform:scaleX(0.925);transform-origin:left;">Facility</div>
<div class="a" style="left:421.70px;top:867.60px;font-size:8.3px;font-weight:bold;color:#e2e4ea;transform:scaleX(0.925);transform-origin:left;">Total: 11.8 MWh</div>
<div class="a" style="left:281.1px;top:885.0px;width:9.2px;height:3.4px;border-radius:1.7px;background:#72d54a"></div>
<div class="a" style="left:295.30px;top:882.80px;font-size:8.3px;font-weight:bold;color:#e2e4ea;transform:scaleX(0.925);transform-origin:left;">Chargers</div>
<div class="a" style="left:335.50px;top:882.80px;font-size:8.3px;font-weight:bold;color:#e2e4ea;transform:scaleX(0.925);transform-origin:left;">Total: 276 kWh</div>
<svg style="left:0;top:0" width="1068" height="906"><defs><radialGradient id="pg" cx="204.4" cy="828.8" r="37.4" gradientUnits="userSpaceOnUse"><stop offset="0" stop-color="#0f5a80"/><stop offset="1" stop-color="#1c88aa"/></radialGradient></defs><path d="M204.4 828.8L204.4 791.4A37.4 37.4 0 1 1 199.71 791.69Z" fill="url(#pg)"/><path d="M204.4 828.8L199.71 791.69A37.4 37.4 0 0 1 204.4 791.4Z" fill="#72d54a" stroke="#0a2030" stroke-width="0.6"/></svg>
<div class="a" style="left:-94.40px;width:600px;text-align:center;top:854.36px;font-size:8.6px;font-weight:bold;color:#eef0f4;transform:scaleX(0.9);transform-origin:center;">Facility</div>
<div class="a" style="left:-94.70px;width:600px;text-align:center;top:864.36px;font-size:8.6px;font-weight:bold;color:#eef0f4;">98%</div>
<div class="a" style="left:148.4px;top:884.3px;width:8.8px;height:3.4px;border-radius:1.7px;background:#28a2dc"></div>
<div class="a" style="left:163.00px;top:881.96px;font-size:8.6px;font-weight:bold;color:#e2e4ea;transform:scaleX(0.93);transform-origin:left;">Facility</div>
<div class="a" style="left:195.4px;top:884.3px;width:8.8px;height:3.4px;border-radius:1.7px;background:#72d54a"></div>
<div class="a" style="left:210.30px;top:881.96px;font-size:8.6px;font-weight:bold;color:#e2e4ea;transform:scaleX(0.93);transform-origin:left;">Chargers</div>
<svg style="left:0;top:0" width="1068" height="906"><rect x="588" y="493.9" width="468.6" height="1.1" fill="#083e54"/><rect x="588" y="517.8" width="468.6" height="1.1" fill="#083e54"/><rect x="588" y="542.0" width="468.6" height="1.1" fill="#083e54"/><rect x="588" y="566.0" width="468.6" height="1.1" fill="#083e54"/><rect x="686.2" y="494.5" width="1.1" height="96" fill="#083e54"/><rect x="742.4" y="494.5" width="1.1" height="96" fill="#083e54"/><rect x="828.7" y="494.5" width="1.1" height="96" fill="#083e54"/><rect x="889.1" y="494.5" width="1.1" height="96" fill="#083e54"/><rect x="973.2" y="494.5" width="1.1" height="96" fill="#083e54"/><rect x="588" y="875.5" width="468.6" height="1.1" fill="#083e54"/></svg>
<div class="a" style="left:591.70px;top:479.24px;font-size:9.7px;font-weight:bold;color:#e6e8ee;transform:scaleX(0.925);transform-origin:left;">Station</div>
<div class="a" style="left:690.8px;top:479.24px;width:49.19px;overflow:hidden;font-size:9.7px;font-weight:bold;color:#e6e8ee;transform:scaleX(0.925);transform-origin:left"># Sessions</div>
<div class="a" style="left:747.4px;top:479.24px;width:78.49px;overflow:hidden;font-size:9.7px;font-weight:bold;color:#e6e8ee;transform:scaleX(0.925);transform-origin:left">Total Charge Time</div>
<div class="a" style="left:833.2px;top:479.24px;width:54.59px;overflow:hidden;font-size:9.7px;font-weight:bold;color:#e6e8ee;transform:scaleX(0.925);transform-origin:left">Total Energy</div>
<div class="a" style="left:894.4px;top:479.24px;width:79.46px;overflow:hidden;font-size:9.7px;font-weight:bold;color:#e6e8ee;transform:scaleX(0.925);transform-origin:left">Total Energy Cost</div>
<div class="a" style="left:1036px;top:479.24px;width:22.27px;overflow:hidden;font-size:9.7px;font-weight:bold;color:#e6e8ee;transform:scaleX(0.925);transform-origin:left">Usage</div>
<div class="a" style="left:591.70px;top:501.34px;font-size:9.5px;font-weight:bold;color:#5a9fe0;transform:scaleX(0.95);transform-origin:left;">BROWNS / BRN...</div>
<div class="a" style="right:329.00px;top:501.24px;font-size:9.7px;font-weight:normal;color:#e6e8ee;-webkit-text-stroke:0.3px #e6e8ee;">4</div>
<div class="a" style="right:243.70px;top:501.24px;font-size:9.7px;font-weight:normal;color:#e6e8ee;-webkit-text-stroke:0.3px #e6e8ee;">12 hours</div>
<div class="a" style="right:182.50px;top:501.24px;font-size:9.7px;font-weight:normal;color:#e6e8ee;-webkit-text-stroke:0.3px #e6e8ee;">5.98 kWh</div>
<div class="a" style="right:98.80px;top:501.24px;font-size:9.7px;font-weight:normal;color:#e6e8ee;-webkit-text-stroke:0.3px #e6e8ee;">$5.98</div>
<div class="a" style="left:977.8px;top:499.2px;width:53.4px;height:14.2px;background:#002342"></div>
<div class="a" style="left:977.8px;top:499.2px;width:2.2px;height:14.2px;background:#72d54a"></div>
<div class="a" style="left:1038.9px;top:501.34px;width:18.63px;overflow:hidden;font-size:9.7px;font-weight:normal;-webkit-text-stroke:0.3px #e6e8ee;color:#e6e8ee;transform:scaleX(0.95);transform-origin:left">Light</div>
<div class="a" style="left:591.70px;top:525.43px;font-size:9.5px;font-weight:bold;color:#5a9fe0;transform:scaleX(0.95);transform-origin:left;">BROWNS / BRN...</div>
<div class="a" style="right:329.00px;top:525.34px;font-size:9.7px;font-weight:normal;color:#e6e8ee;-webkit-text-stroke:0.3px #e6e8ee;">0</div>
<div class="a" style="right:243.70px;top:525.34px;font-size:9.7px;font-weight:normal;color:#e6e8ee;-webkit-text-stroke:0.3px #e6e8ee;">0 min</div>
<div class="a" style="right:182.50px;top:525.34px;font-size:9.7px;font-weight:normal;color:#e6e8ee;-webkit-text-stroke:0.3px #e6e8ee;">5.98 kWh</div>
<div class="a" style="right:98.80px;top:525.34px;font-size:9.7px;font-weight:normal;color:#e6e8ee;-webkit-text-stroke:0.3px #e6e8ee;">$5.98</div>
<div class="a" style="left:977.8px;top:523.3px;width:53.4px;height:14.2px;background:#002342"></div>
<div class="a" style="left:977.8px;top:523.3px;width:1.6px;height:14.2px;background:#72d54a"></div>
<div class="a" style="left:1038.9px;top:525.43px;width:18.63px;overflow:hidden;font-size:9.7px;font-weight:normal;-webkit-text-stroke:0.3px #e6e8ee;color:#e6e8ee;transform:scaleX(0.95);transform-origin:left">Light</div>
<div class="a" style="left:591.70px;top:549.53px;font-size:9.5px;font-weight:bold;color:#5a9fe0;transform:scaleX(0.95);transform-origin:left;">BROWNS / ALFA ...</div>
<div class="a" style="right:329.00px;top:549.44px;font-size:9.7px;font-weight:normal;color:#e6e8ee;-webkit-text-stroke:0.3px #e6e8ee;">0</div>
<div class="a" style="right:243.70px;top:549.44px;font-size:9.7px;font-weight:normal;color:#e6e8ee;-webkit-text-stroke:0.3px #e6e8ee;">2 days</div>
<div class="a" style="right:182.50px;top:549.44px;font-size:9.7px;font-weight:normal;color:#e6e8ee;-webkit-text-stroke:0.3px #e6e8ee;">5.98 kWh</div>
<div class="a" style="right:98.80px;top:549.44px;font-size:9.7px;font-weight:normal;color:#e6e8ee;-webkit-text-stroke:0.3px #e6e8ee;">$5.98</div>
<div class="a" style="left:977.8px;top:547.4px;width:53.4px;height:14.2px;background:#002342"></div>
<div class="a" style="left:977.8px;top:547.4px;width:9px;height:14.2px;background:#2f6b2a"></div>
<div class="a" style="left:984.8px;top:547.4px;width:2px;height:14.2px;background:#72d54a"></div>
<div class="a" style="left:1038.9px;top:549.53px;width:18.63px;overflow:hidden;font-size:9.7px;font-weight:normal;-webkit-text-stroke:0.3px #e6e8ee;color:#e6e8ee;transform:scaleX(0.95);transform-origin:left">Light</div>
<div class="a" style="left:591.70px;top:573.63px;font-size:9.5px;font-weight:bold;color:#5a9fe0;transform:scaleX(0.95);transform-origin:left;">BROWNS / CDJR</div>
<div class="a" style="right:329.00px;top:573.54px;font-size:9.7px;font-weight:normal;color:#e6e8ee;-webkit-text-stroke:0.3px #e6e8ee;">11</div>
<div class="a" style="right:243.70px;top:573.54px;font-size:9.7px;font-weight:normal;color:#e6e8ee;-webkit-text-stroke:0.3px #e6e8ee;">10.8 hours</div>
<div class="a" style="right:182.50px;top:573.54px;font-size:9.7px;font-weight:normal;color:#e6e8ee;-webkit-text-stroke:0.3px #e6e8ee;">5.98 kWh</div>
<div class="a" style="right:98.80px;top:573.54px;font-size:9.7px;font-weight:normal;color:#e6e8ee;-webkit-text-stroke:0.3px #e6e8ee;">$5.98</div>
<div class="a" style="left:977.8px;top:571.5px;width:53.4px;height:14.2px;background:#002342"></div>
<div class="a" style="left:977.8px;top:571.5px;width:2px;height:14.2px;background:#72d54a"></div>
<div class="a" style="left:1038.9px;top:573.63px;width:18.63px;overflow:hidden;font-size:9.7px;font-weight:normal;-webkit-text-stroke:0.3px #e6e8ee;color:#e6e8ee;transform:scaleX(0.95);transform-origin:left">Light</div>
<div class="a" style="left:591.70px;top:880.04px;font-size:9.7px;font-weight:bold;color:#e6e8ee;transform:scaleX(0.925);transform-origin:left;">Total</div>
<div class="a" style="right:328.70px;top:880.04px;font-size:9.7px;font-weight:normal;color:#e6e8ee;-webkit-text-stroke:0.3px #e6e8ee;">15</div>
<div class="a" style="right:243.50px;top:880.04px;font-size:9.7px;font-weight:normal;color:#e6e8ee;-webkit-text-stroke:0.3px #e6e8ee;">2.95 days</div>
<div class="a" style="right:182.30px;top:880.04px;font-size:9.7px;font-weight:normal;color:#e6e8ee;-webkit-text-stroke:0.3px #e6e8ee;">23.9 kWh</div>
<div class="a" style="right:98.30px;top:880.04px;font-size:9.7px;font-weight:normal;color:#e6e8ee;-webkit-text-stroke:0.3px #e6e8ee;">$23.9</div>
</body></html>
